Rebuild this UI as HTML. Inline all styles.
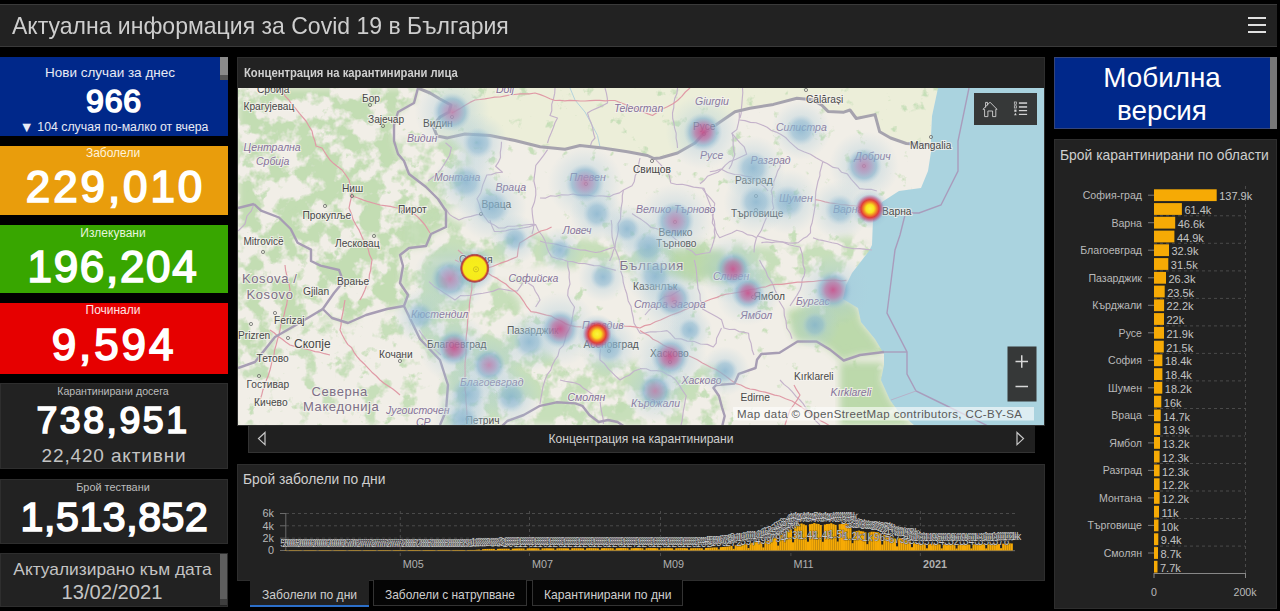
<!DOCTYPE html>
<html><head><meta charset="utf-8">
<style>
*{margin:0;padding:0;box-sizing:border-box}
html,body{width:1280px;height:611px;overflow:hidden;background:#000;font-family:"Liberation Sans",sans-serif}
.a{position:absolute}
.t{position:absolute;white-space:nowrap;line-height:1}
.c{text-align:center}
.panel{position:absolute;background:#222;border:1px solid #2e2e2e}
</style></head><body>
<!-- header -->
<div class="a" style="left:0;top:4px;width:1277px;height:43px;background:#222;border-top:1px solid #3a3a3a;border-bottom:1px solid #3a3a3a"></div>
<div class="t" id="title" style="left:12px;top:14px;font-size:24px;letter-spacing:0px;transform:scaleX(0.959);transform-origin:0 0;color:#cecece">Актуална информация за Covid 19 в България</div>
<div class="a" style="left:1248px;top:17px;width:18px;height:2px;background:#e0e0e0"></div>
<div class="a" style="left:1248px;top:24px;width:18px;height:2px;background:#e0e0e0"></div>
<div class="a" style="left:1248px;top:31px;width:18px;height:2px;background:#e0e0e0"></div>

<!-- left column -->
<div class="a" style="left:0;top:57px;width:228px;height:79px;background:#00288a"></div>
<div class="a" style="left:220px;top:57px;width:8px;height:18px;background:#8a8a8a"></div>
<div class="a" style="left:220px;top:75px;width:8px;height:5px;background:#555"></div>
<div class="t c" style="left:0;top:65.5px;width:220px;font-size:13.5px;color:#e8eaf4">Нови случаи за днес</div>
<div class="t c" style="left:4px;top:85px;width:220px;font-size:32px;font-weight:normal;-webkit-text-stroke:1.7px #fff;color:#fff;letter-spacing:0.8px">966</div>
<div class="t c" style="left:4px;top:119.5px;width:220px;font-size:12.3px;color:#e8eaf4"><span style="font-size:14.5px;vertical-align:-1px">▼</span> 104 случая по-малко от вчера</div>

<div class="a" style="left:0;top:146px;width:228px;height:69px;background:#e99d0c"></div>
<div class="t c" style="left:0;top:147px;width:226px;font-size:12px;color:#fff3dc">Заболели</div>
<div class="t c" style="left:2.5px;top:165px;width:226px;font-size:44px;font-weight:normal;-webkit-text-stroke:1.7px #fff;color:#fff;letter-spacing:2.9px">229,010</div>

<div class="a" style="left:0;top:225px;width:228px;height:68px;background:#38a600"></div>
<div class="t c" style="left:0;top:227px;width:226px;font-size:12px;color:#e6f5dc">Излекувани</div>
<div class="t c" style="left:0;top:245px;width:226px;font-size:44px;font-weight:normal;-webkit-text-stroke:1.7px #fff;color:#fff;letter-spacing:1.7px">196,204</div>

<div class="a" style="left:0;top:303px;width:228px;height:71px;background:#e60000"></div>
<div class="t c" style="left:0;top:304px;width:226px;font-size:12px;color:#ffe4e4">Починали</div>
<div class="t c" style="left:1px;top:323px;width:226px;font-size:44px;font-weight:normal;-webkit-text-stroke:1.7px #fff;color:#fff;letter-spacing:2.9px">9,594</div>

<div class="panel" style="left:0;top:383px;width:228px;height:86px"></div>
<div class="t c" style="left:0;top:386px;width:226px;font-size:10.6px;color:#bdbdbd">Карантинирани досега</div>
<div class="t c" style="left:0;top:402px;width:226px;font-size:37.5px;font-weight:normal;-webkit-text-stroke:1.7px #fff;color:#fff;letter-spacing:2.5px">738,951</div>
<div class="t c" style="left:1px;top:446px;width:226px;font-size:19px;color:#c4c4c4;letter-spacing:0.85px">22,420 активни</div>

<div class="panel" style="left:0;top:479px;width:228px;height:65px"></div>
<div class="t c" style="left:0;top:482px;width:226px;font-size:10.9px;color:#bdbdbd">Брой тествани</div>
<div class="t c" style="left:1.5px;top:496.5px;width:226px;font-size:41px;font-weight:normal;-webkit-text-stroke:1.7px #fff;color:#fff;letter-spacing:0.6px">1,513,852</div>

<div class="panel" style="left:0;top:553px;width:228px;height:54px"></div>
<div class="a" style="left:220px;top:554px;width:7px;height:45px;background:#5e5e5e"></div>
<div class="a" style="left:220px;top:599px;width:7px;height:6px;background:#3e3e3e"></div>
<div class="t c" style="left:1.5px;top:561px;width:222px;font-size:17.35px;color:#c4c4c4">Актуализирано към дата</div>
<div class="t c" style="left:1px;top:581.5px;width:222px;font-size:20.2px;color:#c4c4c4">13/02/2021</div>

<!-- map panel -->
<div class="panel" style="left:237px;top:57px;width:808px;height:369px;background:#222"></div>
<div class="t" style="left:243.5px;top:67px;font-size:12px;font-weight:bold;color:#cfcfcf;transform:scaleX(0.936);transform-origin:0 0">Концентрация на карантинирани лица</div>
<svg class="a" style="left:238px;top:88px" width="806" height="337" viewBox="238 88 806 337" font-family="Liberation Sans">
<defs>
<filter id="bl" x="-20%" y="-20%" width="140%" height="140%"><feGaussianBlur stdDeviation="1.6"/></filter>
<radialGradient id="hz"><stop offset="0" stop-color="#9cc3d8" stop-opacity="0.5"/><stop offset="0.55" stop-color="#a8cadb" stop-opacity="0.28"/><stop offset="1" stop-color="#b0cfdd" stop-opacity="0"/></radialGradient>
<radialGradient id="hb"><stop offset="0" stop-color="#7aaccb" stop-opacity="0.62"/><stop offset="0.6" stop-color="#86b4d0" stop-opacity="0.45"/><stop offset="1" stop-color="#a6c8da" stop-opacity="0"/></radialGradient>
<radialGradient id="hp"><stop offset="0" stop-color="#c07aa8" stop-opacity="0.8"/><stop offset="0.38" stop-color="#a08ab8" stop-opacity="0.62"/><stop offset="0.68" stop-color="#78a8c8" stop-opacity="0.5"/><stop offset="1" stop-color="#a6c8da" stop-opacity="0"/></radialGradient>
<radialGradient id="hm"><stop offset="0" stop-color="#c84c88" stop-opacity="0.88"/><stop offset="0.4" stop-color="#b06aa0" stop-opacity="0.7"/><stop offset="0.7" stop-color="#7caaca" stop-opacity="0.5"/><stop offset="1" stop-color="#a6c8da" stop-opacity="0"/></radialGradient>
<radialGradient id="hs"><stop offset="0" stop-color="#f7f01a"/><stop offset="0.76" stop-color="#f6ea1c"/><stop offset="0.82" stop-color="#ec9424"/><stop offset="0.88" stop-color="#b83c38"/><stop offset="0.95" stop-color="#a8404c" stop-opacity="0.8"/><stop offset="1" stop-color="#a05070" stop-opacity="0.1"/></radialGradient>
<radialGradient id="hw"><stop offset="0" stop-color="#fbf540"/><stop offset="0.28" stop-color="#f8e41e"/><stop offset="0.45" stop-color="#f28a26"/><stop offset="0.62" stop-color="#e03c3a"/><stop offset="0.8" stop-color="#c8406e" stop-opacity="0.55"/><stop offset="1" stop-color="#aa78b4" stop-opacity="0"/></radialGradient>
<filter id="gH" x="0" y="0" width="100%" height="100%" color-interpolation-filters="sRGB"><feTurbulence type="fractalNoise" baseFrequency="0.05" numOctaves="4" seed="4"/><feColorMatrix type="matrix" values="0 0 0 0 0.74 0 0 0 0 0.855 0 0 0 0 0.68 7 0 0 0 -2.9"/><feComponentTransfer><feFuncA type="linear" slope="0.9" intercept="0"/></feComponentTransfer><feGaussianBlur stdDeviation="0.7"/></filter><filter id="gM" x="0" y="0" width="100%" height="100%" color-interpolation-filters="sRGB"><feTurbulence type="fractalNoise" baseFrequency="0.045" numOctaves="4" seed="9"/><feColorMatrix type="matrix" values="0 0 0 0 0.76 0 0 0 0 0.862 0 0 0 0 0.705 7 0 0 0 -3.0"/><feComponentTransfer><feFuncA type="linear" slope="0.9" intercept="0"/></feComponentTransfer><feGaussianBlur stdDeviation="0.7"/></filter><filter id="gL" x="0" y="0" width="100%" height="100%" color-interpolation-filters="sRGB"><feTurbulence type="fractalNoise" baseFrequency="0.07" numOctaves="4" seed="2"/><feColorMatrix type="matrix" values="0 0 0 0 0.76 0 0 0 0 0.862 0 0 0 0 0.705 8 0 0 0 -5.4"/><feComponentTransfer><feFuncA type="linear" slope="0.9" intercept="0"/></feComponentTransfer><feGaussianBlur stdDeviation="0.7"/></filter><filter id="gS" x="0" y="0" width="100%" height="100%" color-interpolation-filters="sRGB"><feTurbulence type="fractalNoise" baseFrequency="0.03" numOctaves="4" seed="5"/><feColorMatrix type="matrix" values="0 0 0 0 0.72 0 0 0 0 0.845 0 0 0 0 0.66 7 0 0 0 -0.8"/><feComponentTransfer><feFuncA type="linear" slope="0.95" intercept="0"/></feComponentTransfer><feGaussianBlur stdDeviation="0.7"/></filter><filter id="gM2" x="0" y="0" width="100%" height="100%" color-interpolation-filters="sRGB"><feTurbulence type="fractalNoise" baseFrequency="0.05" numOctaves="4" seed="13"/><feColorMatrix type="matrix" values="0 0 0 0 0.76 0 0 0 0 0.862 0 0 0 0 0.705 7 0 0 0 -3.9"/><feComponentTransfer><feFuncA type="linear" slope="0.9" intercept="0"/></feComponentTransfer><feGaussianBlur stdDeviation="0.7"/></filter><filter id="mb" x="-10%" y="-10%" width="120%" height="120%"><feGaussianBlur stdDeviation="3.5"/></filter><mask id="cW" maskUnits="userSpaceOnUse" x="238" y="88" width="806" height="337"><polygon points="238,88 418,88 414,103 398,112 394,125 394,141 398,154 404,161 409,174 426,187 438,199 446,211 446,227 431,234 426,246 409,248 400,255 403,266 400,283 408,295 404,306 387,309 366,315 348,323 332,318 296,325 275,337 255,362 238,368" fill="#fff" filter="url(#mb)"/></mask><mask id="cMK" maskUnits="userSpaceOnUse" x="238" y="88" width="806" height="337"><polygon points="238,368 255,362 275,337 296,325 332,318 348,323 366,315 387,309 404,306 420,339 440,360 448,385 446,411 440,425 238,425" fill="#fff" filter="url(#mb)"/></mask><mask id="cR" maskUnits="userSpaceOnUse" x="238" y="88" width="806" height="337"><polygon points="418,88 938,88 932,116 930,145 910,145 880,134 877,116 852,113 824,109 788,99 770,105 723,121 695,144 656,160 625,152 583,145 528,142 505,138 490,134 472,134 453,138 437,136 433,126 440,117 449,112 451,105 440,99 430,93" fill="#fff" filter="url(#mb)"/></mask><mask id="cB" maskUnits="userSpaceOnUse" x="238" y="88" width="806" height="337"><polygon points="405,215 440,214 480,232 560,236 650,246 700,243 780,248 850,236 872,250 862,276 800,284 740,287 690,278 640,274 560,266 480,262 430,262 405,250" fill="#fff" filter="url(#mb)"/></mask><mask id="cSW" maskUnits="userSpaceOnUse" x="238" y="88" width="806" height="337"><polygon points="400,255 430,262 480,262 520,300 530,345 560,360 640,362 720,368 725,425 440,425 448,385 440,360 420,339 404,306 408,295 400,283 403,266" fill="#fff" filter="url(#mb)"/></mask><mask id="cNW" maskUnits="userSpaceOnUse" x="238" y="88" width="806" height="337"><polygon points="394,141 453,138 470,160 460,200 446,211 438,199 426,187 409,174 398,154" fill="#fff" filter="url(#mb)"/></mask><mask id="cST" maskUnits="userSpaceOnUse" x="238" y="88" width="806" height="337"><polygon points="786.7,311.6 803,306 830,300.7 849,300.7 858,308 861,322 875,339 884,354 860,355 841,360.5 830,349.6 816.5,341.5 797.5,341.5 792,333 789.4,322.5" fill="#fff" filter="url(#mb)"/></mask><mask id="cTK" maskUnits="userSpaceOnUse" x="238" y="88" width="806" height="337"><polygon points="840,362 884,362 881,380 890,400 898,411 915,426 840,426" fill="#fff" filter="url(#mb)"/></mask><mask id="cSL" maskUnits="userSpaceOnUse" x="238" y="88" width="806" height="337"><polygon points="670,248 725,250 728,275 690,282 668,270" fill="#fff" filter="url(#mb)"/></mask></defs><rect x="238" y="88" width="806" height="337" fill="#f1eee7"/><polygon points="418,88 938,88 932,116 930,145 906.3,143.5 890.6,138 879.7,131.8 875,114.6 856.3,118.5 850,110 843.8,112.2 828,111.4 821.9,105.2 812.5,99.7 796.9,98.2 773.4,104.4 750,108.3 735,111.7 715,125.5 705,132 695,143 677.5,153 660,158 647.5,155.5 627.5,151.7 602.5,148 580,145.5 565,149.2 540,146.7 515,140.5 490,135.5 465,134 447.5,137.9 437,136 433,126 440,117 449,112 451,105 440,99 430,93" fill="#eceed9"/><polyline points="570,88 575,100 585,112 592,125 597.5,135.5 600,147" fill="none" stroke="#b4d2dc" stroke-width="1"/><g mask="url(#cW)"><rect x="238" y="88" width="230" height="337" filter="url(#gH)"/></g><g mask="url(#cMK)"><rect x="238" y="295" width="230" height="131" filter="url(#gM2)"/></g><rect x="238" y="88" width="806" height="337" filter="url(#gL)"/><g mask="url(#cB)"><rect x="390" y="200" width="500" height="100" filter="url(#gM)"/></g><g mask="url(#cSW)"><rect x="388" y="240" width="350" height="186" filter="url(#gM)"/></g><g mask="url(#cNW)"><rect x="390" y="135" width="85" height="80" filter="url(#gM)"/></g><g mask="url(#cST)"><rect x="770" y="290" width="125" height="80" filter="url(#gS)"/></g><g mask="url(#cTK)"><rect x="835" y="355" width="85" height="75" filter="url(#gS)"/></g><g mask="url(#cSL)"><rect x="660" y="240" width="75" height="50" filter="url(#gS)"/></g><polygon points="938,88 932,116 931,136 931,152 928,171 921,188 899,191 882,202 873,219 872,245 869,251 859,264 852,273 846,285 843,299 858,308 861,322 875,339 884,354 884,365 881,380 890,400 898,411 915,426 1044,426 1044,88" fill="#aad3df"/><polyline points="969,88 958,141 958,171 941,205 919,213 899,213" fill="none" stroke="#a99cbc" stroke-width="1.4"/><polyline points="905,215 900,235 895,250 887,313 907,352 907,374 916,391 947,406 988,426" fill="none" stroke="#a99cbc" stroke-width="1.4"/><polyline points="884,352 907,352" fill="none" stroke="#a99cbc" stroke-width="1.4"/><polyline points="916,391 891,400" fill="none" stroke="#b7aec6" stroke-width="0.9"/><polyline points="445.5,142.8 451.4,147.7 449.5,155.5 446.5,160.5 443.6,165.3 440.4,170.1 435.7,175 428,181" fill="none" stroke="#c4b2ca" stroke-width="1.15" stroke-linejoin="round"/><polyline points="501.5,141.8 501.2,147.2 500.3,152.3 500.5,157.5 498.3,162.4 495.6,166.3 502.5,172.2 496.5,172.8 491.3,174.6 486.8,175 485.1,179.2 482.8,185 480.8,192.7 477,198.7 479.2,204.1 480.3,208.3 482.8,214.4 477.0,214.6 471,216.4 464.4,217.7 459,220 453.4,217.1 449.5,214.4 445.5,208.5" fill="none" stroke="#c4b2ca" stroke-width="1.15" stroke-linejoin="round"/><polyline points="547.6,149.6 543.6,155.4 539.8,160.3 535.8,165.3 535.2,170.8 534.5,175.4 533.9,181 535.7,188.8 535.8,194.8 534.5,202.0 532,208.5 532.3,213.2 532.9,218.1 533.9,224 533.4,228.8 532,234" fill="none" stroke="#c4b2ca" stroke-width="1.15" stroke-linejoin="round"/><polyline points="482.8,214.4 488.7,222.3 494.2,224.9 498.5,228 504.5,228.0 507.9,226.3 514,226.2 520.7,225.5 526.9,224.7 532,224.2 535.6,224.6 538.3,230.5 542.5,236 545.3,241.3 547,247.5 548.6,251.8 551.6,256.7 557.8,258.7 561.6,259.2 567.7,261.2 572.6,261.6 579,263.5 584.7,263.5 589.5,264.6 594.0,265.6 599.7,265.8 604.4,267.6 609.7,268.7 615.8,270.4" fill="none" stroke="#c4b2ca" stroke-width="1.15" stroke-linejoin="round"/><polyline points="489.8,220 491.6,225.3 494.4,231.5 501.0,231.4 505.5,230.9 511.1,229.4 517.3,229 524.0,227.8 528.8,226.9 535.6,224.6" fill="none" stroke="#c4b2ca" stroke-width="1.15" stroke-linejoin="round"/><polyline points="567.7,261.2 567.8,266.5 569.3,272.3 569.1,277.5 570,284 568.1,289.9 567.7,295.6 570.6,301.5 574.5,307 573.2,312.7 572.3,318.5 571.3,323.8 568.8,329.9 566.3,334.0 565,340 563.2,345.6 559.5,349.4 557.9,355.8 555,360 552.0,365.8 550.7,370.2 547.4,374.3 545,380 542.9,386.8 542.0,392.4 540.8,398.6 540,404" fill="none" stroke="#c4b2ca" stroke-width="1.15" stroke-linejoin="round"/><polyline points="611.2,220 611.9,225.4 611.8,231.9 612.1,236.8 613.5,243 615.3,249.3 617.2,254.0 619.4,259.6 620.4,265.8 620.7,271.1 622.6,276.5 623.3,282.7 625,288.7 626.8,293.8 628.2,300.9 631.0,306.2 631.8,311.6 633.2,317.5 634,323 636.4,327.3 640,333.3" fill="none" stroke="#c4b2ca" stroke-width="1.15" stroke-linejoin="round"/><polyline points="460,295.6 464.9,295.8 471.9,295.3 476.4,294.1 483,293.3 488.3,292.2 493.3,291.1 499,288.7 504.3,289.5 511.6,291.0 517.3,291 521.1,285.7 524,279.6 529.2,283.7 533.3,286.4 535.3,291.3 538.5,296.1 540,300 535.6,307" fill="none" stroke="#c4b2ca" stroke-width="1.15" stroke-linejoin="round"/><polyline points="540,241 545.4,242.7 551.8,243.5 556.9,244.4 562.4,246.0 567.8,247 572.6,248.4 579.8,249.9 585.0,250.1 590.5,251.5 595.7,252.5 600.4,251.7 604.6,250.2 609.3,248.6 615,247 613.2,251.2 611.8,256.3 609.6,261" fill="none" stroke="#c4b2ca" stroke-width="1.15" stroke-linejoin="round"/><polyline points="540,198 545.7,198.1 550.6,195.8 556.1,196.3 561.5,194.7 568.2,195.0 573,194 578.1,195.1 583.1,195.1 588.1,195.1 594.5,196.3 599.8,195.8 604.5,196.1 609.6,196.8 613.6,194.5 619.5,192.9 623.5,190 632,185.7 634.2,181.8 635.2,175.8 637.4,171.7 638.6,164.4 640,158" fill="none" stroke="#c4b2ca" stroke-width="1.15" stroke-linejoin="round"/><polyline points="623.5,190 622.3,195.7 622.3,201.7 621.1,208.2 620.7,213.5 620.6,219.0 618.0,223.8 618.5,229.4 617.3,236.0 615.6,241.9 615,247" fill="none" stroke="#c4b2ca" stroke-width="1.15" stroke-linejoin="round"/><polyline points="632,213.5 635.9,216.3 641.4,219.6 646.8,223.5 651,227.4 656.0,228.5 662.6,231.0 668,233 672.2,236.4 676.5,240.1 680.3,241.9 683.9,245.0 687.0,248.7 692.3,251.3 695.9,255 702.4,253.5 709.8,252.5 711.9,247.0 713.5,241.8 715,235.8 714.3,231.3 714.8,225.0 714.3,221.1 712.4,215.6 712.6,210.7 710.0,204.5 707,196.8 704,188.4 698.2,187.6 693.6,187.1 688.2,185.6 682.1,184.3 676.7,184.5 670.8,183 669.7,177.7 668,171.7 663.5,168.5 660.9,164.8 656,160" fill="none" stroke="#c4b2ca" stroke-width="1.15" stroke-linejoin="round"/><polyline points="709.8,171.7 715.5,170.9 721,169 727.6,172.5 734.8,174.5 741.0,175.1 745.2,176.1 751.5,177 755.7,181.0 759.7,183.2 764.4,186.7 768,191" fill="none" stroke="#c4b2ca" stroke-width="1.15" stroke-linejoin="round"/><polyline points="732,132.8 733.2,137.8 733.1,144.4 733.5,148.8 734.8,155 732.9,160.1 731.5,164.7 729,169" fill="none" stroke="#c4b2ca" stroke-width="1.15" stroke-linejoin="round"/><polyline points="739.3,112.5 739.3,118.2 738.4,123.2 736.8,129.6 732,133.3 735.6,137.8 739.8,142.7 744.2,146.8 746.7,154.2 741.2,156.7 735.9,159.2 729.5,161.6 725.4,165.1 722,169 717.8,172.2 711.7,174.5 707.4,176.3 704.5,180.0 700,183.7" fill="none" stroke="#c4b2ca" stroke-width="1.15" stroke-linejoin="round"/><polyline points="739.3,120 745.0,120.6 750.4,122.4 756.1,122.7 761.4,124.7 767.1,127.2 771.0,130.2 776.2,132.1 781,134.6 785.6,137.5 789.7,141.8 794.7,146.4 798.2,149.3 803.9,151.7 810.5,154.2 816.0,157.8 822.8,161.6" fill="none" stroke="#c4b2ca" stroke-width="1.15" stroke-linejoin="round"/><polyline points="781,161.6 779.9,167.2 777.6,171.1 776,176.3 773.8,181.4 773.6,185.4 771.2,191 772.5,195.9 772.3,202.0 773.7,208.2 770.3,212.8 766.3,218 763.6,224.4 761.4,230.3 756.5,237.7 754.5,245.5 754,252.4" fill="none" stroke="#c4b2ca" stroke-width="1.15" stroke-linejoin="round"/><polyline points="702.5,188.6 705.9,193.5 710.2,197.9 714.7,203.3 714.0,209.8 712.9,216.3 712.3,223 714.8,227.3 716.6,233.0 719.6,237.7 725.6,235.3 731.7,233.0 736.8,230.3 742.4,231.7 747.1,234.6 752.3,235.5 756.5,237.7" fill="none" stroke="#c4b2ca" stroke-width="1.15" stroke-linejoin="round"/><polyline points="822.8,161.6 821.3,167.3 819.9,172.3 819.9,175.6 818,181.2 816.7,187.3 815.8,191.9 815.4,198.4 815.2,204.8 814.3,210.8 813,218 812.0,223.3 810.5,227.3 810.5,232.8 806.7,236.8 803.1,238.6 798.2,242.6 793.0,243.1 787.7,242.9 781.9,241.8 776.5,241.8 772.0,242.6 766.8,242.0 761.4,242.6" fill="none" stroke="#c4b2ca" stroke-width="1.15" stroke-linejoin="round"/><polyline points="822.8,161.6 827.1,163.5 833.2,167.4 838.3,168.3 841.6,172.3 847.3,173.9 851.3,179.3 855.2,183.6 859.6,188.6 865.4,189.3 871.2,189.3 876.8,191" fill="none" stroke="#c4b2ca" stroke-width="1.15" stroke-linejoin="round"/><polyline points="813,237.7 818.3,239.7 822.2,240.4 828.1,241.7 832.1,242.7 837.5,243.8 843.1,246.6 847.3,247.5 853.8,248.8 859.9,248.6 866.0,249.4 872,250" fill="none" stroke="#c4b2ca" stroke-width="1.15" stroke-linejoin="round"/><polyline points="757,235.8 762.8,237.6 766.4,239.1 772.1,240.2 776.6,241 783.0,242.3 789.0,244.7 794.5,246.0 800,247" fill="none" stroke="#c4b2ca" stroke-width="1.15" stroke-linejoin="round"/><polyline points="694.3,260 695.7,266.2 696.5,271.9 697,279 697.6,283.9 698.0,288.7 700.0,294.2 700.2,299.8 701.9,303.7 702.5,309 707.5,311.8 712.1,314.2 717.6,317.3 721.5,319.7 724,328 729.3,329.5 734.7,329.3 739.0,331.6 743.2,332.1 748.6,333.3 749.1,338.2 751.1,343.4 752.2,350.3 754,355" fill="none" stroke="#c4b2ca" stroke-width="1.15" stroke-linejoin="round"/><polyline points="759.5,260 762.3,265.4 765.8,271.0 767.7,276.3 771.0,281.1 773.1,284.7 775,290 777.4,295.2 778.7,300.3 781.1,304.2 784,309 784.3,315.3 786.0,320.9 786.7,328 790.2,333.3 792,338.8" fill="none" stroke="#c4b2ca" stroke-width="1.15" stroke-linejoin="round"/><polyline points="640,333.3 645.4,332.9 650.6,331.8 656.5,331.8 661.2,331.5 667,330.6 670.8,333.8 675.3,338.8 681.2,338.9 687.3,341.1 694.3,341.5 700.4,344.0 707.4,344.4 713.3,347 716.2,343.1 716.6,338.2 719.3,332.7 721.5,328" fill="none" stroke="#c4b2ca" stroke-width="1.15" stroke-linejoin="round"/><polyline points="640,368.6 646.3,368.8 650.9,370.7 656.7,370.6 661.7,371.3 667.1,374.6 671.0,376.1 675.3,379.5 679.2,384.9 682.0,389.6 686.2,395.8 685.3,400.2 684.3,406.2 683.4,410.5 682.7,415.8 682.1,421.0 680.7,426" fill="none" stroke="#c4b2ca" stroke-width="1.15" stroke-linejoin="round"/><polyline points="800,247 802.1,253.6 802.9,258.0 803.1,265.0 805,270 804.3,275.2 802.2,279.6 801.6,285.1 800,290 796.8,295.6 793.8,300.1 790,306" fill="none" stroke="#c4b2ca" stroke-width="1.15" stroke-linejoin="round"/><polyline points="680,290 674.5,293.4 670.7,295.7 664.2,296.7 660,300 655.8,303.6 652.7,306.8 648.8,310.5 645,315" fill="none" stroke="#c4b2ca" stroke-width="1.15" stroke-linejoin="round"/><polyline points="429,281.7 433.8,286.2 440,290 445.1,293.6 449.8,296.6 455,300 460,296" fill="none" stroke="#c4b2ca" stroke-width="1.15" stroke-linejoin="round"/><polyline points="419,330 422.1,334.7 426.8,340.6 430,345 434.7,349.3 441,355" fill="none" stroke="#c4b2ca" stroke-width="1.15" stroke-linejoin="round"/><polyline points="600,340 600.6,345.2 600.5,349.5 599.9,354.6 600,360 604.6,363.8 608.3,368.9 611.7,372.1 616.4,376.8 620,380 624.9,377.0 629.3,375.2 634.2,371.0 640,369" fill="none" stroke="#c4b2ca" stroke-width="1.15" stroke-linejoin="round"/><polyline points="560,380 565.1,381.2 570.3,382.1 575.5,383.0 580,385 583.5,388.3 587.2,390.6 592.4,394.3 595.6,396.4 600,400 600.6,406.4 601.5,411.3 603.0,418.1 603.5,424" fill="none" stroke="#c4b2ca" stroke-width="1.15" stroke-linejoin="round"/><polyline points="238,231 245,224 247,216 251.3,210.8 254,204" fill="none" stroke="#c4b2ca" stroke-width="1.15" stroke-linejoin="round"/><polyline points="555,88 554.7,93.4 553.5,98.6 551.7,104.3 551.8,110.7 550,115.5 557.5,118 555.0,122.8 553.3,127.8 551.3,132.8 549.0,138.1 547.5,143" fill="none" stroke="#c4b2ca" stroke-width="1.15" stroke-linejoin="round"/><polyline points="605,88 606.4,93.1 607.3,98.1 607.5,103 601.9,106.0 598.2,107.6 591.6,110.5 587.5,113 589.1,118.1 591.3,123.3 592.5,127.2 593.6,133.5 595,138 591.8,141.7 590,147" fill="none" stroke="#c4b2ca" stroke-width="1.15" stroke-linejoin="round"/><polyline points="677.5,88 676.9,93.7 674.8,98.2 673.9,103.4 673.8,107.5 672.5,113 672.7,118.5 674.0,123.5 674.5,127.7 676.2,133.3 676.1,138.1 677.2,143.4 677.5,148" fill="none" stroke="#c4b2ca" stroke-width="1.15" stroke-linejoin="round"/><polyline points="742.5,88 742.8,92.8 742.3,98.3 741.9,103.6 741.4,108.7 741.2,113.3 740,118" fill="none" stroke="#c4b2ca" stroke-width="1.15" stroke-linejoin="round"/><polyline points="780,380 784.0,384.4 788.5,387.9 791.9,391.4 796.4,396.9 800,400 803.1,403.6 806.1,408.2 809.6,413.3 812.5,416.3 816.0,421.1 820,425" fill="none" stroke="#c4b2ca" stroke-width="1.15" stroke-linejoin="round"/><polyline points="282,88 285,96 288.9,100.0 291.9,104.6 296,109 299.4,113.4 302.2,116.6 306,121 308.7,125.7 312,131 313.1,136.2 314.8,140.7 316,146 322,148 325.7,153.8 330,160 333.7,163.6 337.8,166.7 342,170 345.8,175.0 349,180 350.3,186.4 352,192 351.4,197.2 350.0,203.1 349,208 351.3,213.4 353.2,219.8 356,225 358.8,229.6 361.0,234.5 363.3,239.7 366,244 368.2,249.1 369.5,254.6 372,260 371.1,265.3 370.7,270.1 369.4,274.7 369,280 366.6,284.8 364.9,290.0 362.4,295.5 360,300" fill="none" stroke="#e09aa6" stroke-width="1.2" stroke-linejoin="round"/><polyline points="352,196 357.4,197.8 362.9,199.9 368.3,201.7 374.7,203.5 380,205 384.6,205.6 390.2,206.3 395.0,207.5 400.5,208.4 405.4,209.0 410,210 414.0,213.7 417.9,217.1 421.6,221.0 425,225 430,233" fill="none" stroke="#e09aa6" stroke-width="1.2" stroke-linejoin="round"/><polyline points="452,113 456.6,110.4 460.9,108.1 465.6,105.0 470.0,102.4 475,100 480.0,99.5 484.9,98.9 490,98 494.6,97.1 500.0,97.0 505.3,95.9 510,95 514.5,94.5 520.2,93.9 525.1,93.8 529.5,93.9 535,93 540.3,94.6 545.1,96.5 549.9,98.7 555,100.5 559.8,100.4 564.9,100.8 569.8,100.4 575.2,100.7 580.4,101.0 585,101 590.2,100.7 595.3,100.4 599.6,100.3 605.2,100.9 609.7,100.5 615,100.5 620.0,102.5 624.0,104.0 628.7,105.7 633.7,107.6 638.9,109.8 643.1,111.9 648.1,113.9 652.5,115.5 657.4,112.3 662.4,109.0 667.4,106.7 673.0,103.8 677.5,100.5 681.8,96.4 685.4,92.0 690,88" fill="none" stroke="#e09aa6" stroke-width="1.2" stroke-linejoin="round"/><polyline points="455,260 459.8,262.2 464.6,263.9 470.0,266.3 475,268 481.6,270.5 487.5,272.7 491.7,275.8 497.1,278.4 501.1,281.2 505.8,284 510.0,288.1 515.5,291.7 519.6,295.6 523.6,301.3 526.9,306.7 531,311.6 536.3,312.4 540.9,313.6 546.5,315.2 551.6,316.2 556.0,318.9 560.7,320.8 565.0,323.6 570,325.4 575.7,326.6 582.2,327.0 588.3,327.7 593.6,327.1 599.3,327.4 604.5,326.7 609.1,326.5 614.5,326.2 620,325.4 624.7,326.1 630.3,326.4 635.0,326.9 640,328 644.6,325.6 650.7,324.3 655.4,321.7 660.5,320.0 665.3,317.8 670.8,315.2 675.3,313.6 680.7,311.6 685.4,309.4 691.0,307.2 696.0,305.3 701.2,303.3 706.3,301.0 711.5,299.0 716.9,297.4 721.5,295.3 726.4,294.2 731.5,293.5 736.6,292.6 741.2,291.8 746.5,290.7 751.0,289.3 756.1,288.8 761.0,287.4 765.9,286.8 770.7,284.9 775.8,284.4 781.5,284.4 786.9,283.6 792.4,282.9 797.6,282.2 802.6,282.1 808.4,281.6 813.4,281.5 819.3,280.6 824.7,280.4 829.9,280.3 835.3,280.0 841.4,280.9 846.4,280.4" fill="none" stroke="#e09aa6" stroke-width="1.2" stroke-linejoin="round"/><polyline points="487.5,268 492.6,266.5 497.4,264.5 502.1,262.6 507.4,260.9 511.9,258.9 517.3,256.7 518.1,249.9 519.6,243 525.4,239.4 530.0,236.6 535.6,233.7 540.8,231.0 546.7,229.5 551.6,227" fill="none" stroke="#e09aa6" stroke-width="1.2" stroke-linejoin="round"/><polyline points="640,330.6 644.4,333.2 649.1,335.6 653.0,339.2 657.8,341.5 662.9,344.7 667,347 672.2,348.8 677.3,351.7 683.1,353.1 688,355.5 693.0,357.7 697.3,359.8 702.4,363.0 706.4,365.0 711.0,367.5 716,369.5 720.6,372.6 726.2,376.4 731.4,380.4 736,383.6 740.9,385.0 745.5,387.6 750,389 754.9,389.7 759.6,391.1 765.0,392.2 769.3,393.4 774.7,395.1 779.5,396 785.6,398.7 792,401 797.9,404.8 802.7,408.1 808.4,412 813.1,415.0 816.8,417.7 820.9,420.9 825.6,423.2 830,426" fill="none" stroke="#e09aa6" stroke-width="1.2" stroke-linejoin="round"/><polyline points="345,300 344.2,304.5 343.4,309.8 342.3,315.3 341.3,319.8 341.1,324.7 340,330 342.3,335.0 345,340 347.7,344.4 351.5,347.5 354.0,352.3 356.9,356.4 360,360 364.0,363.7 368.1,368.1 371.9,372.2 376.3,376.0 380,380 384.0,383.3 388.2,386.0 392.5,388.7 396.3,391.7 400,395" fill="none" stroke="#e09aa6" stroke-width="1.2" stroke-linejoin="round"/><polyline points="270,330 274.1,332.7 277.9,336.3 282.3,339.3 285.7,342.0 290,345 294.7,346.3 300.0,347.0 305.1,349.0 310,350 315.1,351.6 319.7,352.2 324.5,353.7 330,355" fill="none" stroke="#e09aa6" stroke-width="1.2" stroke-linejoin="round"/><polyline points="815.4,199.6 820.3,200.5 825.0,201.9 829.7,202.9 835.1,203.6 840,204.5 845.3,204.8 849.6,205.5 854.5,206.1 860.1,206.9 864.8,207.5 870,208" fill="none" stroke="#e09aa6" stroke-width="1.2" stroke-linejoin="round"/><polyline points="285,265 285.6,270.3 286.7,274.8 287.7,280.2 289.3,285.3 290,290 288.3,294.9 287.4,299.7 286.7,304.5 285.0,310.3 284.2,314.6 282.5,320.2 280.8,324.7 280,330 279.1,334.6 277.4,339.8 276.2,344.6 274.5,350.5 274.0,355.2 272.2,359.8 271.3,364.7 270,370 268.3,375.4 266.5,379.8 265.5,385.1 262.9,389.9 261.8,394.6 260,400" fill="none" stroke="#e09aa6" stroke-width="1.2" stroke-linejoin="round"/><polyline points="794,385 796.8,390.2 800,395 797.0,400.1 793.7,405.0 790,410 788.2,415.3 786.5,420.3 785,425" fill="none" stroke="#e09aa6" stroke-width="1.2" stroke-linejoin="round"/><polyline points="458,250 461.7,253.2 465.7,256.7 470,260 474,268" fill="none" stroke="#e09aa6" stroke-width="1.2" stroke-linejoin="round"/><polyline points="474,268 473.0,273.0 472.4,278.6 471.8,283.9 471.8,289.5 471.0,294.4 470,300 469.4,304.6 469.2,309.9 468.3,314.5 467.7,319.8 467.4,325.4 467.2,329.8 466.4,334.7 466,340 466.3,344.9 466.0,350.2 466.0,354.5 465.3,359.9 465.0,365.4 465.1,370.3 465.1,374.6 465,380 465.1,384.7 465.0,389.7 465.8,394.5 465.8,399.9 466.3,404.6 466.7,409.8 467.0,415.2 467,420" fill="none" stroke="#e09aa6" stroke-width="1.2" stroke-linejoin="round"/><polyline points="418,88 414,103 398,112 394,125 394,141 398,154 404,161 409,174 426,187 438,199 446,211 446,227 431,234 426,246 409,248 400,255 403,266 400,283 408,295 404,306 420,339 440,360 448,385 446,411 440,425" fill="none" stroke="#a79db4" stroke-width="2.4" stroke-linejoin="round"/><polyline points="502,426 507.3,421 523.7,415 540,405.8 556.5,402.3 575.3,403.4 582.3,405.8 589.4,415 598.7,422 608,420 617.5,422 625,427" fill="none" stroke="#a79db4" stroke-width="2.4" stroke-linejoin="round"/><polyline points="722,427 724.7,416 722,407.5 719,396 713.4,387.8 716.3,385 734.5,383.6 738.8,373.8 755.6,368 757,359.7 761.3,354 779.5,352.7 797.5,341.5 816.5,341.5 830,349.6 843.7,360.5 860,355 884,352" fill="none" stroke="#a79db4" stroke-width="2.4" stroke-linejoin="round"/><polyline points="254,204 261,210.6 279,217.5 290.7,229 297.6,242.7 311,249.6 311,261 320.5,265.6 339,270 343.4,281.7 334,293 322.8,309 332,318 348,323 366,315 387,309 404,306" fill="none" stroke="#a79db4" stroke-width="2.4" stroke-linejoin="round"/><polyline points="238,368 255,362 275,337 296,325 322.8,309" fill="none" stroke="#a79db4" stroke-width="2.4" stroke-linejoin="round"/><polyline points="238,208 254,204" fill="none" stroke="#a79db4" stroke-width="2.4" stroke-linejoin="round"/><polyline points="418,88 430,93 440,99 451,105 449,112 440,117 433,126 437,136 447.5,137.9 465,134 490,135.5 515,140.5 540,146.7 565,149.2 580,145.5 602.5,148 627.5,151.7 647.5,155.5 654,158.5 660,158 677.5,153 695,143 705,132 715,125.5 735,111.7 750,108.3 773.4,104.4 796.9,98.2 812.5,99.7 821.9,105.2 828,111.4 843.8,112.2 850,110 856.3,118.5 875,114.6 879.7,131.8 890.6,138 906.3,143.5 933,145" fill="none" stroke="#a6a3ae" stroke-width="3" stroke-linejoin="round"/><circle cx="370" cy="105" r="1.6" fill="none" stroke="#6d6d6d" stroke-width="0.8"/><circle cx="383" cy="126" r="1.6" fill="none" stroke="#6d6d6d" stroke-width="0.8"/><circle cx="452" cy="117" r="1.6" fill="none" stroke="#6d6d6d" stroke-width="0.8"/><circle cx="352" cy="196" r="1.6" fill="none" stroke="#6d6d6d" stroke-width="0.8"/><circle cx="325" cy="206" r="1.6" fill="none" stroke="#6d6d6d" stroke-width="0.8"/><circle cx="403" cy="212" r="1.6" fill="none" stroke="#6d6d6d" stroke-width="0.8"/><circle cx="374" cy="236" r="1.6" fill="none" stroke="#6d6d6d" stroke-width="0.8"/><circle cx="263" cy="252" r="1.6" fill="none" stroke="#6d6d6d" stroke-width="0.8"/><circle cx="313" cy="288" r="1.6" fill="none" stroke="#6d6d6d" stroke-width="0.8"/><circle cx="275" cy="313" r="1.6" fill="none" stroke="#6d6d6d" stroke-width="0.8"/><circle cx="251" cy="324" r="1.6" fill="none" stroke="#6d6d6d" stroke-width="0.8"/><circle cx="288" cy="338" r="1.6" fill="none" stroke="#6d6d6d" stroke-width="0.8"/><circle cx="400" cy="361" r="1.6" fill="none" stroke="#6d6d6d" stroke-width="0.8"/><circle cx="259" cy="376" r="1.6" fill="none" stroke="#6d6d6d" stroke-width="0.8"/><circle cx="257" cy="400" r="1.6" fill="none" stroke="#6d6d6d" stroke-width="0.8"/><circle cx="467" cy="419" r="1.6" fill="none" stroke="#6d6d6d" stroke-width="0.8"/><circle cx="481" cy="214" r="1.6" fill="none" stroke="#6d6d6d" stroke-width="0.8"/><circle cx="652" cy="161" r="1.6" fill="none" stroke="#6d6d6d" stroke-width="0.8"/><circle cx="704" cy="134" r="1.6" fill="none" stroke="#6d6d6d" stroke-width="0.8"/><circle cx="756" cy="196" r="1.6" fill="none" stroke="#6d6d6d" stroke-width="0.8"/><circle cx="756" cy="210" r="1.6" fill="none" stroke="#6d6d6d" stroke-width="0.8"/><circle cx="675" cy="222" r="1.6" fill="none" stroke="#6d6d6d" stroke-width="0.8"/><circle cx="931" cy="137" r="1.6" fill="none" stroke="#6d6d6d" stroke-width="0.8"/><circle cx="806" cy="90" r="1.6" fill="none" stroke="#6d6d6d" stroke-width="0.8"/><circle cx="864" cy="166" r="1.6" fill="none" stroke="#6d6d6d" stroke-width="0.8"/><circle cx="586" cy="184" r="1.6" fill="none" stroke="#6d6d6d" stroke-width="0.8"/><circle cx="475" cy="268" r="1.6" fill="none" stroke="#6d6d6d" stroke-width="0.8"/><circle cx="609" cy="351" r="1.6" fill="none" stroke="#6d6d6d" stroke-width="0.8"/><circle cx="670" cy="362" r="1.6" fill="none" stroke="#6d6d6d" stroke-width="0.8"/><circle cx="753" cy="297" r="1.6" fill="none" stroke="#6d6d6d" stroke-width="0.8"/><circle cx="530" cy="329" r="1.6" fill="none" stroke="#6d6d6d" stroke-width="0.8"/><text x="243.5" y="110" font-size="10.2" fill="#484848" stroke="#f6f4ef" stroke-width="2" stroke-opacity="0.75" paint-order="stroke">Крагујевац</text><text x="362" y="102" font-size="10.2" fill="#484848" stroke="#f6f4ef" stroke-width="2" stroke-opacity="0.75" paint-order="stroke">Бор</text><text x="368" y="123" font-size="10.2" fill="#484848" stroke="#f6f4ef" stroke-width="2" stroke-opacity="0.75" paint-order="stroke">Зајечар</text><text x="423" y="127" font-size="10.2" fill="#484848" stroke="#f6f4ef" stroke-width="2" stroke-opacity="0.75" paint-order="stroke">Видин</text><text x="342" y="192" font-size="10.2" fill="#484848" stroke="#f6f4ef" stroke-width="2" stroke-opacity="0.75" paint-order="stroke">Ниш</text><text x="302.5" y="219" font-size="10.2" fill="#484848" stroke="#f6f4ef" stroke-width="2" stroke-opacity="0.75" paint-order="stroke">Прокупље</text><text x="398" y="213" font-size="10.2" fill="#484848" stroke="#f6f4ef" stroke-width="2" stroke-opacity="0.75" paint-order="stroke">Пирот</text><text x="335" y="246.5" font-size="10.2" fill="#484848" stroke="#f6f4ef" stroke-width="2" stroke-opacity="0.75" paint-order="stroke">Лесковац</text><text x="243.5" y="245" font-size="10" fill="#484848" stroke="#f6f4ef" stroke-width="2" stroke-opacity="0.75" paint-order="stroke">Mitrovicë</text><text x="481.5" y="207.5" font-size="10.2" fill="#484848" stroke="#f6f4ef" stroke-width="2" stroke-opacity="0.75" paint-order="stroke">Враца</text><text x="633" y="173" font-size="10.2" fill="#484848" stroke="#f6f4ef" stroke-width="2" stroke-opacity="0.75" paint-order="stroke">Свищов</text><text x="693" y="130" font-size="10.2" fill="#484848" stroke="#f6f4ef" stroke-width="2" stroke-opacity="0.75" paint-order="stroke">Русе</text><text x="735" y="184" font-size="10.2" fill="#484848" stroke="#f6f4ef" stroke-width="2" stroke-opacity="0.75" paint-order="stroke">Разград</text><text x="731" y="217" font-size="10.2" fill="#484848" stroke="#f6f4ef" stroke-width="2" stroke-opacity="0.75" paint-order="stroke">Търговище</text><text x="658.5" y="235.5" font-size="10.2" fill="#484848" stroke="#f6f4ef" stroke-width="2" stroke-opacity="0.75" paint-order="stroke">Велико</text><text x="656" y="246.5" font-size="10.2" fill="#484848" stroke="#f6f4ef" stroke-width="2" stroke-opacity="0.75" paint-order="stroke">Търново</text><text x="806" y="103" font-size="10.2" fill="#484848" stroke="#f6f4ef" stroke-width="2" stroke-opacity="0.75" paint-order="stroke">Călărași</text><text x="910" y="149" font-size="10.2" fill="#484848" stroke="#f6f4ef" stroke-width="2" stroke-opacity="0.75" paint-order="stroke">Mangalia</text><text x="882" y="214.5" font-size="10.2" fill="#484848" stroke="#f6f4ef" stroke-width="2" stroke-opacity="0.75" paint-order="stroke">Варна</text><text x="459" y="263" font-size="10.5" fill="#484848" stroke="#f6f4ef" stroke-width="2" stroke-opacity="0.75" paint-order="stroke">София</text><text x="337" y="284.5" font-size="10.2" fill="#484848" stroke="#f6f4ef" stroke-width="2" stroke-opacity="0.75" paint-order="stroke">Врање</text><text x="303" y="294.5" font-size="10.2" fill="#484848" stroke="#f6f4ef" stroke-width="2" stroke-opacity="0.75" paint-order="stroke">Gjilan</text><text x="274" y="323.5" font-size="10.2" fill="#484848" stroke="#f6f4ef" stroke-width="2" stroke-opacity="0.75" paint-order="stroke">Ferizaj</text><text x="238" y="339" font-size="10.2" fill="#484848" stroke="#f6f4ef" stroke-width="2" stroke-opacity="0.75" paint-order="stroke">Prizren</text><text x="294" y="348" font-size="12" fill="#484848" stroke="#f6f4ef" stroke-width="2" stroke-opacity="0.75" paint-order="stroke">Скопје</text><text x="256.5" y="362" font-size="10.2" fill="#484848" stroke="#f6f4ef" stroke-width="2" stroke-opacity="0.75" paint-order="stroke">Тетово</text><text x="379" y="358" font-size="10.2" fill="#484848" stroke="#f6f4ef" stroke-width="2" stroke-opacity="0.75" paint-order="stroke">Кочани</text><text x="246.5" y="388" font-size="10.2" fill="#484848" stroke="#f6f4ef" stroke-width="2" stroke-opacity="0.75" paint-order="stroke">Гостивар</text><text x="254" y="405.5" font-size="10.2" fill="#484848" stroke="#f6f4ef" stroke-width="2" stroke-opacity="0.75" paint-order="stroke">Кичево</text><text x="427" y="348" font-size="10.2" fill="#484848" stroke="#f6f4ef" stroke-width="2" stroke-opacity="0.75" paint-order="stroke">Благоевград</text><text x="465.5" y="424" font-size="10.2" fill="#484848" stroke="#f6f4ef" stroke-width="2" stroke-opacity="0.75" paint-order="stroke">Петрич</text><text x="633" y="290" font-size="10.2" fill="#484848" stroke="#f6f4ef" stroke-width="2" stroke-opacity="0.75" paint-order="stroke">Казанлък</text><text x="507" y="333.5" font-size="10.2" fill="#484848" stroke="#f6f4ef" stroke-width="2" stroke-opacity="0.75" paint-order="stroke">Пазарджик</text><text x="583.5" y="348" font-size="10.2" fill="#484848" stroke="#f6f4ef" stroke-width="2" stroke-opacity="0.75" paint-order="stroke">Асеновград</text><text x="650" y="356.5" font-size="10.2" fill="#484848" stroke="#f6f4ef" stroke-width="2" stroke-opacity="0.75" paint-order="stroke">Хасково</text><text x="753.5" y="300" font-size="10.2" fill="#484848" stroke="#f6f4ef" stroke-width="2" stroke-opacity="0.75" paint-order="stroke">Ямбол</text><text x="794" y="379.5" font-size="10.2" fill="#484848" stroke="#f6f4ef" stroke-width="2" stroke-opacity="0.75" paint-order="stroke">Kırklareli</text><text x="740.5" y="401" font-size="10.2" fill="#484848" stroke="#f6f4ef" stroke-width="2" stroke-opacity="0.75" paint-order="stroke">Edirne</text><text x="257" y="93" font-size="10.2" fill="#484848" stroke="#f6f4ef" stroke-width="2" stroke-opacity="0.75" paint-order="stroke">Србија</text><text x="242" y="283" font-size="13" fill="#7d6f86" letter-spacing="0.6" stroke="#f6f4ef" stroke-width="2" stroke-opacity="0.75" paint-order="stroke">Kosova /</text><text x="246.5" y="299" font-size="13" fill="#7d6f86" letter-spacing="0.6" stroke="#f6f4ef" stroke-width="2" stroke-opacity="0.75" paint-order="stroke">Kosovo</text><text x="311.5" y="395.5" font-size="13" fill="#7d6f86" letter-spacing="0.6" stroke="#f6f4ef" stroke-width="2" stroke-opacity="0.75" paint-order="stroke">Северна</text><text x="303" y="411" font-size="13" fill="#7d6f86" letter-spacing="0.6" stroke="#f6f4ef" stroke-width="2" stroke-opacity="0.75" paint-order="stroke">Македонија</text><text x="619.5" y="270" font-size="13.5" fill="#7d6f86" letter-spacing="0.6" stroke="#f6f4ef" stroke-width="2" stroke-opacity="0.75" paint-order="stroke">България</text><text x="243.5" y="150.5" font-size="10.5" font-style="italic" fill="#86729a" stroke="#f6f4ef" stroke-width="2" stroke-opacity="0.75" paint-order="stroke">Централна</text><text x="256" y="164.5" font-size="10.5" font-style="italic" fill="#86729a" stroke="#f6f4ef" stroke-width="2" stroke-opacity="0.75" paint-order="stroke">Србија</text><text x="407" y="142" font-size="10.5" font-style="italic" fill="#86729a" stroke="#f6f4ef" stroke-width="2" stroke-opacity="0.75" paint-order="stroke">Видин</text><text x="434" y="181" font-size="10.5" font-style="italic" fill="#86729a" stroke="#f6f4ef" stroke-width="2" stroke-opacity="0.75" paint-order="stroke">Монтана</text><text x="495.5" y="191" font-size="10.5" font-style="italic" fill="#86729a" stroke="#f6f4ef" stroke-width="2" stroke-opacity="0.75" paint-order="stroke">Враца</text><text x="569.5" y="181" font-size="10.5" font-style="italic" fill="#86729a" stroke="#f6f4ef" stroke-width="2" stroke-opacity="0.75" paint-order="stroke">Плевен</text><text x="562.5" y="233.5" font-size="10.5" font-style="italic" fill="#86729a" stroke="#f6f4ef" stroke-width="2" stroke-opacity="0.75" paint-order="stroke">Ловеч</text><text x="636" y="213" font-size="10.5" font-style="italic" fill="#86729a" stroke="#f6f4ef" stroke-width="2" stroke-opacity="0.75" paint-order="stroke">Велико Търново</text><text x="614" y="111.5" font-size="10.5" font-style="italic" fill="#86729a" stroke="#f6f4ef" stroke-width="2" stroke-opacity="0.75" paint-order="stroke">Teleorman</text><text x="695" y="104.5" font-size="10.5" font-style="italic" fill="#86729a" stroke="#f6f4ef" stroke-width="2" stroke-opacity="0.75" paint-order="stroke">Giurgiu</text><text x="496" y="93" font-size="10.5" font-style="italic" fill="#86729a" stroke="#f6f4ef" stroke-width="2" stroke-opacity="0.75" paint-order="stroke">Dolj</text><text x="700" y="159" font-size="10.5" font-style="italic" fill="#86729a" stroke="#f6f4ef" stroke-width="2" stroke-opacity="0.75" paint-order="stroke">Русе</text><text x="750.5" y="164" font-size="10.5" font-style="italic" fill="#86729a" stroke="#f6f4ef" stroke-width="2" stroke-opacity="0.75" paint-order="stroke">Разград</text><text x="776" y="131" font-size="10.5" font-style="italic" fill="#86729a" stroke="#f6f4ef" stroke-width="2" stroke-opacity="0.75" paint-order="stroke">Силистра</text><text x="854.5" y="160" font-size="10.5" font-style="italic" fill="#86729a" stroke="#f6f4ef" stroke-width="2" stroke-opacity="0.75" paint-order="stroke">Добрич</text><text x="779" y="202" font-size="10.5" font-style="italic" fill="#86729a" stroke="#f6f4ef" stroke-width="2" stroke-opacity="0.75" paint-order="stroke">Шумен</text><text x="833" y="213" font-size="10.5" font-style="italic" fill="#86729a" stroke="#f6f4ef" stroke-width="2" stroke-opacity="0.75" paint-order="stroke">Варна</text><text x="713" y="280" font-size="10.5" font-style="italic" fill="#86729a" stroke="#f6f4ef" stroke-width="2" stroke-opacity="0.75" paint-order="stroke">Сливен</text><text x="740.5" y="319" font-size="10.5" font-style="italic" fill="#86729a" stroke="#f6f4ef" stroke-width="2" stroke-opacity="0.75" paint-order="stroke">Ямбол</text><text x="796" y="304.5" font-size="10.5" font-style="italic" fill="#86729a" stroke="#f6f4ef" stroke-width="2" stroke-opacity="0.75" paint-order="stroke">Бургас</text><text x="634" y="307.5" font-size="10.5" font-style="italic" fill="#86729a" stroke="#f6f4ef" stroke-width="2" stroke-opacity="0.75" paint-order="stroke">Стара Загора</text><text x="508.5" y="281.5" font-size="10.5" font-style="italic" fill="#86729a" stroke="#f6f4ef" stroke-width="2" stroke-opacity="0.75" paint-order="stroke">Софийска</text><text x="582" y="329" font-size="10.5" font-style="italic" fill="#86729a" stroke="#f6f4ef" stroke-width="2" stroke-opacity="0.75" paint-order="stroke">Пловдив</text><text x="681.5" y="384" font-size="10.5" font-style="italic" fill="#86729a" stroke="#f6f4ef" stroke-width="2" stroke-opacity="0.75" paint-order="stroke">Хасково</text><text x="567.5" y="401" font-size="10.5" font-style="italic" fill="#86729a" stroke="#f6f4ef" stroke-width="2" stroke-opacity="0.75" paint-order="stroke">Смолян</text><text x="631" y="407" font-size="10.5" font-style="italic" fill="#86729a" stroke="#f6f4ef" stroke-width="2" stroke-opacity="0.75" paint-order="stroke">Кърджали</text><text x="411" y="317.5" font-size="10.5" font-style="italic" fill="#86729a" stroke="#f6f4ef" stroke-width="2" stroke-opacity="0.75" paint-order="stroke">Кюстендил</text><text x="460" y="385.5" font-size="10.5" font-style="italic" fill="#86729a" stroke="#f6f4ef" stroke-width="2" stroke-opacity="0.75" paint-order="stroke">Благоевград</text><text x="386" y="414" font-size="10.5" font-style="italic" fill="#86729a" stroke="#f6f4ef" stroke-width="2" stroke-opacity="0.75" paint-order="stroke">Југоисточен</text><text x="830.5" y="395.5" font-size="10.5" font-style="italic" fill="#86729a" stroke="#f6f4ef" stroke-width="2" stroke-opacity="0.75" paint-order="stroke">Kırklareli</text><text x="416" y="426" font-size="10.5" font-style="italic" fill="#86729a" stroke="#f6f4ef" stroke-width="2" stroke-opacity="0.75" paint-order="stroke">СР</text><circle cx="452" cy="112" r="37.5" fill="url(#hz)"/><circle cx="478" cy="143" r="30.0" fill="url(#hz)"/><circle cx="466" cy="182" r="32.5" fill="url(#hz)"/><circle cx="492" cy="207" r="35.0" fill="url(#hz)"/><circle cx="585" cy="183" r="37.5" fill="url(#hz)"/><circle cx="597" cy="214" r="27.5" fill="url(#hz)"/><circle cx="627" cy="229" r="25.0" fill="url(#hz)"/><circle cx="648" cy="247" r="30.0" fill="url(#hz)"/><circle cx="515" cy="239" r="25.0" fill="url(#hz)"/><circle cx="603" cy="277" r="25.0" fill="url(#hz)"/><circle cx="703" cy="132" r="37.5" fill="url(#hz)"/><circle cx="675" cy="221" r="37.5" fill="url(#hz)"/><circle cx="753" cy="168" r="32.5" fill="url(#hz)"/><circle cx="756" cy="202" r="32.5" fill="url(#hz)"/><circle cx="788" cy="202" r="32.5" fill="url(#hz)"/><circle cx="864" cy="166" r="35.0" fill="url(#hz)"/><circle cx="801" cy="130" r="30.0" fill="url(#hz)"/><circle cx="733" cy="269" r="35.0" fill="url(#hz)"/><circle cx="748" cy="293" r="32.5" fill="url(#hz)"/><circle cx="833" cy="290" r="37.5" fill="url(#hz)"/><circle cx="673" cy="299" r="35.0" fill="url(#hz)"/><circle cx="655" cy="276" r="30.0" fill="url(#hz)"/><circle cx="670" cy="357" r="37.5" fill="url(#hz)"/><circle cx="655" cy="391" r="32.5" fill="url(#hz)"/><circle cx="609" cy="348" r="30.0" fill="url(#hz)"/><circle cx="560" cy="329" r="37.5" fill="url(#hz)"/><circle cx="529" cy="342" r="30.0" fill="url(#hz)"/><circle cx="511" cy="397" r="30.0" fill="url(#hz)"/><circle cx="450" cy="279" r="37.5" fill="url(#hz)"/><circle cx="420" cy="316" r="27.5" fill="url(#hz)"/><circle cx="454" cy="348" r="35.0" fill="url(#hz)"/><circle cx="489" cy="365" r="32.5" fill="url(#hz)"/><circle cx="468" cy="394" r="32.5" fill="url(#hz)"/><circle cx="463" cy="420" r="30.0" fill="url(#hz)"/><circle cx="725" cy="371" r="25.0" fill="url(#hz)"/><circle cx="815" cy="325" r="25.0" fill="url(#hz)"/><circle cx="840" cy="210" r="30.0" fill="url(#hz)"/><circle cx="690" cy="330" r="22.5" fill="url(#hz)"/><circle cx="560" cy="250" r="22.5" fill="url(#hz)"/><circle cx="452" cy="112" r="19.5" fill="url(#hp)"/><circle cx="478" cy="143" r="15.6" fill="url(#hb)"/><circle cx="466" cy="182" r="16.9" fill="url(#hb)"/><circle cx="492" cy="207" r="18.2" fill="url(#hb)"/><circle cx="585" cy="183" r="19.5" fill="url(#hp)"/><circle cx="597" cy="214" r="14.3" fill="url(#hb)"/><circle cx="627" cy="229" r="13.0" fill="url(#hb)"/><circle cx="648" cy="247" r="15.6" fill="url(#hb)"/><circle cx="515" cy="239" r="13.0" fill="url(#hb)"/><circle cx="603" cy="277" r="13.0" fill="url(#hb)"/><circle cx="703" cy="132" r="19.5" fill="url(#hm)"/><circle cx="675" cy="221" r="19.5" fill="url(#hp)"/><circle cx="753" cy="168" r="16.9" fill="url(#hb)"/><circle cx="756" cy="202" r="16.9" fill="url(#hb)"/><circle cx="788" cy="202" r="16.9" fill="url(#hb)"/><circle cx="864" cy="166" r="18.2" fill="url(#hp)"/><circle cx="801" cy="130" r="15.6" fill="url(#hb)"/><circle cx="733" cy="269" r="18.2" fill="url(#hm)"/><circle cx="748" cy="293" r="16.9" fill="url(#hm)"/><circle cx="833" cy="290" r="19.5" fill="url(#hm)"/><circle cx="673" cy="299" r="18.2" fill="url(#hp)"/><circle cx="655" cy="276" r="15.6" fill="url(#hb)"/><circle cx="670" cy="357" r="19.5" fill="url(#hm)"/><circle cx="655" cy="391" r="16.9" fill="url(#hp)"/><circle cx="609" cy="348" r="15.6" fill="url(#hb)"/><circle cx="560" cy="329" r="19.5" fill="url(#hm)"/><circle cx="529" cy="342" r="15.6" fill="url(#hb)"/><circle cx="511" cy="397" r="15.6" fill="url(#hb)"/><circle cx="450" cy="279" r="19.5" fill="url(#hp)"/><circle cx="420" cy="316" r="14.3" fill="url(#hb)"/><circle cx="454" cy="348" r="18.2" fill="url(#hm)"/><circle cx="489" cy="365" r="16.9" fill="url(#hp)"/><circle cx="468" cy="394" r="16.9" fill="url(#hb)"/><circle cx="463" cy="420" r="15.6" fill="url(#hb)"/><circle cx="725" cy="371" r="13.0" fill="url(#hb)"/><circle cx="815" cy="325" r="13.0" fill="url(#hb)"/><circle cx="840" cy="210" r="15.6" fill="url(#hb)"/><circle cx="690" cy="330" r="11.7" fill="url(#hb)"/><circle cx="560" cy="250" r="11.7" fill="url(#hb)"/><circle cx="474.7" cy="268.3" r="22" fill="url(#hb)"/><circle cx="474.7" cy="268.3" r="14.8" fill="url(#hs)"/><circle cx="476" cy="269.3" r="2.6" fill="none" stroke="#c8b820" stroke-width="0.8"/><circle cx="476" cy="269.3" r="0.8" fill="#c8b820"/><circle cx="597.1" cy="334.1" r="20" fill="url(#hb)"/><circle cx="597.1" cy="334.1" r="14.5" fill="url(#hw)"/><circle cx="870" cy="208.7" r="20" fill="url(#hb)"/><circle cx="870" cy="208.7" r="14.5" fill="url(#hw)"/>
<rect x="974" y="93" width="63" height="32" fill="#333" fill-opacity="0.97"/>
<path d="M984.6,116.6 V109.3 L983,109.3 L990,102.2 L997,109.3 L995.8,109.3 V116.6 H992.6 V111 H987.9 V116.6 Z M985.6,107.6 V102.4 H987.6 V105.4" fill="none" stroke="#d4d4d4" stroke-width="0.9" stroke-linejoin="round"/><rect x="1014.3" y="102" width="2.2" height="2.2" fill="none" stroke="#d4d4d4" stroke-width="0.7"/><rect x="1014.3" y="105.8" width="2.2" height="2.2" fill="none" stroke="#d4d4d4" stroke-width="0.7"/><rect x="1014.3" y="109.6" width="2.2" height="2.2" fill="#d4d4d4"/><path d="M1014.1,115.2 L1015.4,112.8 L1016.7,115.2 Z" fill="#d4d4d4"/><rect x="1018.9" y="102.3" width="8.2" height="1.5" fill="#d4d4d4"/><rect x="1018.9" y="106.2" width="8.2" height="1.5" fill="#d4d4d4"/><rect x="1018.9" y="110.0" width="8.2" height="1.2" fill="#d4d4d4"/><rect x="1018.9" y="113.8" width="8.2" height="1.2" fill="#d4d4d4"/>
<rect x="1007.5" y="346.5" width="29" height="55" fill="#333" fill-opacity="0.97"/>
<path d="M1015.5,361.5 H1028 M1021.75,355.3 V367.7 M1015.5,386.5 H1028" stroke="#d8d8d8" stroke-width="1.5"/>
<rect x="733" y="407" width="301" height="13.5" fill="#ffffff" fill-opacity="0.6"/>
<text x="737" y="418" font-size="11.5" letter-spacing="0.38" fill="#5a5a5a">Map data © OpenStreetMap contributors, CC-BY-SA</text>
</svg>

<!-- carousel bar -->
<div class="a" style="left:248px;top:426px;width:787px;height:27px;background:#202020;border-left:1px solid #333;border-bottom:1px solid #333"></div>
<svg class="a" style="left:248px;top:426px" width="787" height="27" viewBox="248 426 787 27">
<path d="M265,432.5 L258.5,438.6 L265,444.7 Z" fill="none" stroke="#c8c8c8" stroke-width="1.2"/>
<path d="M1017,432.5 L1023.5,438.6 L1017,444.7 Z" fill="none" stroke="#c8c8c8" stroke-width="1.2"/>
</svg>
<div class="t" style="left:548.5px;top:432.5px;font-size:12.1px;color:#cfcfcf;letter-spacing:0px">Концентрация на карантинирани</div>

<!-- chart panel -->
<div class="panel" style="left:237px;top:464px;width:808px;height:117px"></div>
<div class="t" style="left:243px;top:473px;font-size:13.8px;color:#cfcfcf">Брой заболели по дни</div>
<svg class="a" style="left:238px;top:490px" width="806" height="90" viewBox="238 490 806 90" font-family="Liberation Sans">
<line x1="286" y1="513.5" x2="1015" y2="513.5" stroke="#4a4a4a" stroke-width="1" stroke-dasharray="3,3"/><line x1="286" y1="525.8" x2="1015" y2="525.8" stroke="#4a4a4a" stroke-width="1" stroke-dasharray="3,3"/><line x1="286" y1="538.2" x2="1015" y2="538.2" stroke="#4a4a4a" stroke-width="1" stroke-dasharray="3,3"/><line x1="400.3" y1="511" x2="400.3" y2="556" stroke="#4a4a4a" stroke-width="1" stroke-dasharray="3,3"/><line x1="529.5" y1="511" x2="529.5" y2="556" stroke="#4a4a4a" stroke-width="1" stroke-dasharray="3,3"/><line x1="660.5" y1="511" x2="660.5" y2="556" stroke="#4a4a4a" stroke-width="1" stroke-dasharray="3,3"/><line x1="790.9" y1="511" x2="790.9" y2="556" stroke="#4a4a4a" stroke-width="1" stroke-dasharray="3,3"/><line x1="920.4" y1="511" x2="920.4" y2="556" stroke="#4a4a4a" stroke-width="1" stroke-dasharray="3,3"/><line x1="285.8" y1="513" x2="285.8" y2="551" stroke="#6a6a6a" stroke-width="1"/><line x1="286" y1="550.7" x2="1015" y2="550.7" stroke="#6a6a6a" stroke-width="1"/><line x1="280" y1="513.5" x2="286" y2="513.5" stroke="#6a6a6a" stroke-width="1"/><text x="274" y="517.3" text-anchor="end" font-size="10.8" fill="#b8b8b8">6k</text><line x1="280" y1="525.8" x2="286" y2="525.8" stroke="#6a6a6a" stroke-width="1"/><text x="274" y="529.5999999999999" text-anchor="end" font-size="10.8" fill="#b8b8b8">4k</text><line x1="280" y1="538.2" x2="286" y2="538.2" stroke="#6a6a6a" stroke-width="1"/><text x="274" y="542.0" text-anchor="end" font-size="10.8" fill="#b8b8b8">2k</text><line x1="280" y1="550.5" x2="286" y2="550.5" stroke="#6a6a6a" stroke-width="1"/><text x="274" y="554.3" text-anchor="end" font-size="10.8" fill="#b8b8b8">0</text>
<g fill="#f6aa05"><rect x="284.61" y="550.15" width="2.2" height="0.35"/><rect x="286.73" y="550.38" width="2.2" height="0.12"/><rect x="288.86" y="550.13" width="2.2" height="0.37"/><rect x="290.98" y="550.13" width="2.2" height="0.37"/><rect x="293.10" y="550.12" width="2.2" height="0.38"/><rect x="295.22" y="550.12" width="2.2" height="0.38"/><rect x="297.35" y="550.13" width="2.2" height="0.37"/><rect x="299.47" y="550.13" width="2.2" height="0.37"/><rect x="301.59" y="550.37" width="2.2" height="0.13"/><rect x="303.72" y="550.12" width="2.2" height="0.38"/><rect x="305.84" y="550.12" width="2.2" height="0.38"/><rect x="307.96" y="550.11" width="2.2" height="0.39"/><rect x="310.08" y="550.11" width="2.2" height="0.39"/><rect x="312.21" y="550.10" width="2.2" height="0.40"/><rect x="314.33" y="550.13" width="2.2" height="0.37"/><rect x="316.45" y="550.37" width="2.2" height="0.13"/><rect x="318.58" y="550.11" width="2.2" height="0.39"/><rect x="320.70" y="550.09" width="2.2" height="0.41"/><rect x="322.82" y="550.09" width="2.2" height="0.41"/><rect x="324.95" y="550.09" width="2.2" height="0.41"/><rect x="327.07" y="550.08" width="2.2" height="0.42"/><rect x="329.19" y="550.11" width="2.2" height="0.39"/><rect x="331.31" y="550.36" width="2.2" height="0.14"/><rect x="333.44" y="550.10" width="2.2" height="0.40"/><rect x="335.56" y="550.09" width="2.2" height="0.41"/><rect x="337.68" y="550.08" width="2.2" height="0.42"/><rect x="339.81" y="550.08" width="2.2" height="0.42"/><rect x="341.93" y="550.07" width="2.2" height="0.43"/><rect x="344.05" y="550.10" width="2.2" height="0.40"/><rect x="346.17" y="550.36" width="2.2" height="0.14"/><rect x="348.30" y="550.08" width="2.2" height="0.42"/><rect x="350.42" y="550.07" width="2.2" height="0.43"/><rect x="352.54" y="550.06" width="2.2" height="0.44"/><rect x="354.67" y="550.07" width="2.2" height="0.43"/><rect x="356.79" y="550.07" width="2.2" height="0.43"/><rect x="358.91" y="550.08" width="2.2" height="0.42"/><rect x="361.03" y="550.35" width="2.2" height="0.15"/><rect x="363.16" y="550.07" width="2.2" height="0.43"/><rect x="365.28" y="550.05" width="2.2" height="0.45"/><rect x="367.40" y="550.04" width="2.2" height="0.46"/><rect x="369.53" y="550.05" width="2.2" height="0.45"/><rect x="371.65" y="550.05" width="2.2" height="0.45"/><rect x="373.77" y="550.06" width="2.2" height="0.44"/><rect x="375.89" y="550.35" width="2.2" height="0.15"/><rect x="378.02" y="550.06" width="2.2" height="0.44"/><rect x="380.14" y="550.04" width="2.2" height="0.46"/><rect x="382.26" y="550.03" width="2.2" height="0.47"/><rect x="384.39" y="550.03" width="2.2" height="0.47"/><rect x="386.51" y="550.03" width="2.2" height="0.47"/><rect x="388.63" y="550.06" width="2.2" height="0.44"/><rect x="390.75" y="550.34" width="2.2" height="0.16"/><rect x="392.88" y="550.05" width="2.2" height="0.45"/><rect x="395.00" y="550.02" width="2.2" height="0.48"/><rect x="397.12" y="550.01" width="2.2" height="0.49"/><rect x="399.25" y="550.02" width="2.2" height="0.48"/><rect x="401.37" y="550.02" width="2.2" height="0.48"/><rect x="403.49" y="550.05" width="2.2" height="0.45"/><rect x="405.62" y="550.34" width="2.2" height="0.16"/><rect x="407.74" y="550.02" width="2.2" height="0.48"/><rect x="409.86" y="550.01" width="2.2" height="0.49"/><rect x="411.98" y="549.99" width="2.2" height="0.51"/><rect x="414.11" y="550.01" width="2.2" height="0.49"/><rect x="416.23" y="550.00" width="2.2" height="0.50"/><rect x="418.35" y="550.02" width="2.2" height="0.48"/><rect x="420.48" y="550.33" width="2.2" height="0.17"/><rect x="422.60" y="550.01" width="2.2" height="0.49"/><rect x="424.72" y="549.99" width="2.2" height="0.51"/><rect x="426.84" y="549.98" width="2.2" height="0.52"/><rect x="428.97" y="549.99" width="2.2" height="0.51"/><rect x="431.09" y="549.99" width="2.2" height="0.51"/><rect x="433.21" y="550.02" width="2.2" height="0.48"/><rect x="435.34" y="550.33" width="2.2" height="0.17"/><rect x="437.46" y="549.99" width="2.2" height="0.51"/><rect x="439.58" y="549.97" width="2.2" height="0.53"/><rect x="441.70" y="549.96" width="2.2" height="0.54"/><rect x="443.83" y="549.98" width="2.2" height="0.52"/><rect x="445.95" y="549.98" width="2.2" height="0.52"/><rect x="448.07" y="549.99" width="2.2" height="0.51"/><rect x="450.20" y="550.33" width="2.2" height="0.17"/><rect x="452.32" y="549.98" width="2.2" height="0.52"/><rect x="454.44" y="549.97" width="2.2" height="0.53"/><rect x="456.56" y="549.96" width="2.2" height="0.54"/><rect x="458.69" y="549.97" width="2.2" height="0.53"/><rect x="460.81" y="549.96" width="2.2" height="0.54"/><rect x="462.93" y="549.99" width="2.2" height="0.51"/><rect x="465.06" y="550.32" width="2.2" height="0.18"/><rect x="467.18" y="549.97" width="2.2" height="0.53"/><rect x="469.30" y="549.94" width="2.2" height="0.56"/><rect x="471.43" y="549.95" width="2.2" height="0.55"/><rect x="473.55" y="549.95" width="2.2" height="0.55"/><rect x="475.67" y="549.75" width="2.2" height="0.75"/><rect x="477.79" y="549.58" width="2.2" height="0.92"/><rect x="479.92" y="550.12" width="2.2" height="0.38"/><rect x="482.04" y="549.18" width="2.2" height="1.32"/><rect x="484.16" y="548.97" width="2.2" height="1.53"/><rect x="486.29" y="548.92" width="2.2" height="1.58"/><rect x="488.41" y="548.90" width="2.2" height="1.60"/><rect x="490.53" y="548.85" width="2.2" height="1.65"/><rect x="492.65" y="548.88" width="2.2" height="1.62"/><rect x="494.78" y="549.95" width="2.2" height="0.55"/><rect x="496.90" y="548.84" width="2.2" height="1.66"/><rect x="499.02" y="548.75" width="2.2" height="1.75"/><rect x="501.15" y="548.70" width="2.2" height="1.80"/><rect x="503.27" y="548.67" width="2.2" height="1.83"/><rect x="505.39" y="548.65" width="2.2" height="1.85"/><rect x="507.51" y="548.71" width="2.2" height="1.79"/><rect x="509.64" y="549.88" width="2.2" height="0.62"/><rect x="511.76" y="548.60" width="2.2" height="1.90"/><rect x="513.88" y="548.52" width="2.2" height="1.98"/><rect x="516.01" y="548.45" width="2.2" height="2.05"/><rect x="518.13" y="548.40" width="2.2" height="2.10"/><rect x="520.25" y="548.41" width="2.2" height="2.09"/><rect x="522.37" y="548.48" width="2.2" height="2.02"/><rect x="524.50" y="549.79" width="2.2" height="0.71"/><rect x="526.62" y="548.36" width="2.2" height="2.14"/><rect x="528.74" y="548.32" width="2.2" height="2.18"/><rect x="530.87" y="548.22" width="2.2" height="2.28"/><rect x="532.99" y="548.25" width="2.2" height="2.25"/><rect x="535.11" y="548.26" width="2.2" height="2.24"/><rect x="537.24" y="548.35" width="2.2" height="2.15"/><rect x="539.36" y="549.76" width="2.2" height="0.74"/><rect x="541.48" y="548.33" width="2.2" height="2.17"/><rect x="543.60" y="548.29" width="2.2" height="2.21"/><rect x="545.73" y="548.21" width="2.2" height="2.29"/><rect x="547.85" y="548.28" width="2.2" height="2.22"/><rect x="549.97" y="548.30" width="2.2" height="2.20"/><rect x="552.10" y="548.37" width="2.2" height="2.13"/><rect x="554.22" y="549.76" width="2.2" height="0.74"/><rect x="556.34" y="548.31" width="2.2" height="2.19"/><rect x="558.46" y="548.26" width="2.2" height="2.24"/><rect x="560.59" y="548.24" width="2.2" height="2.26"/><rect x="562.71" y="548.25" width="2.2" height="2.25"/><rect x="564.83" y="548.27" width="2.2" height="2.23"/><rect x="566.96" y="548.33" width="2.2" height="2.17"/><rect x="569.08" y="549.76" width="2.2" height="0.74"/><rect x="571.20" y="548.23" width="2.2" height="2.27"/><rect x="573.32" y="548.18" width="2.2" height="2.32"/><rect x="575.45" y="548.20" width="2.2" height="2.30"/><rect x="577.57" y="548.21" width="2.2" height="2.29"/><rect x="579.69" y="548.22" width="2.2" height="2.28"/><rect x="581.82" y="548.31" width="2.2" height="2.19"/><rect x="583.94" y="549.74" width="2.2" height="0.76"/><rect x="586.06" y="548.21" width="2.2" height="2.29"/><rect x="588.18" y="548.12" width="2.2" height="2.38"/><rect x="590.31" y="548.14" width="2.2" height="2.36"/><rect x="592.43" y="548.16" width="2.2" height="2.34"/><rect x="594.55" y="548.21" width="2.2" height="2.29"/><rect x="596.68" y="548.30" width="2.2" height="2.20"/><rect x="598.80" y="549.73" width="2.2" height="0.77"/><rect x="600.92" y="548.23" width="2.2" height="2.27"/><rect x="603.05" y="548.11" width="2.2" height="2.39"/><rect x="605.17" y="548.14" width="2.2" height="2.36"/><rect x="607.29" y="548.17" width="2.2" height="2.33"/><rect x="609.41" y="548.11" width="2.2" height="2.39"/><rect x="611.54" y="548.24" width="2.2" height="2.26"/><rect x="613.66" y="549.72" width="2.2" height="0.78"/><rect x="615.78" y="548.18" width="2.2" height="2.32"/><rect x="617.91" y="548.15" width="2.2" height="2.35"/><rect x="620.03" y="548.08" width="2.2" height="2.42"/><rect x="622.15" y="548.05" width="2.2" height="2.45"/><rect x="624.27" y="548.08" width="2.2" height="2.42"/><rect x="626.40" y="548.20" width="2.2" height="2.30"/><rect x="628.52" y="549.72" width="2.2" height="0.78"/><rect x="630.64" y="548.18" width="2.2" height="2.32"/><rect x="632.77" y="548.13" width="2.2" height="2.37"/><rect x="634.89" y="548.05" width="2.2" height="2.45"/><rect x="637.01" y="548.10" width="2.2" height="2.40"/><rect x="639.13" y="548.10" width="2.2" height="2.40"/><rect x="641.26" y="548.24" width="2.2" height="2.26"/><rect x="643.38" y="549.72" width="2.2" height="0.78"/><rect x="645.50" y="548.15" width="2.2" height="2.35"/><rect x="647.63" y="548.07" width="2.2" height="2.43"/><rect x="649.75" y="548.06" width="2.2" height="2.44"/><rect x="651.87" y="548.09" width="2.2" height="2.41"/><rect x="653.99" y="548.11" width="2.2" height="2.39"/><rect x="656.12" y="548.22" width="2.2" height="2.28"/><rect x="658.24" y="549.72" width="2.2" height="0.78"/><rect x="660.36" y="548.19" width="2.2" height="2.31"/><rect x="662.49" y="548.14" width="2.2" height="2.36"/><rect x="664.61" y="548.15" width="2.2" height="2.35"/><rect x="666.73" y="548.17" width="2.2" height="2.33"/><rect x="668.85" y="548.18" width="2.2" height="2.32"/><rect x="670.98" y="548.27" width="2.2" height="2.23"/><rect x="673.10" y="549.71" width="2.2" height="0.79"/><rect x="675.22" y="548.17" width="2.2" height="2.33"/><rect x="677.35" y="548.14" width="2.2" height="2.36"/><rect x="679.47" y="548.07" width="2.2" height="2.43"/><rect x="681.59" y="548.10" width="2.2" height="2.40"/><rect x="683.72" y="548.12" width="2.2" height="2.38"/><rect x="685.84" y="548.27" width="2.2" height="2.23"/><rect x="687.96" y="549.73" width="2.2" height="0.77"/><rect x="690.08" y="548.24" width="2.2" height="2.26"/><rect x="692.21" y="548.18" width="2.2" height="2.32"/><rect x="694.33" y="548.16" width="2.2" height="2.34"/><rect x="696.45" y="548.14" width="2.2" height="2.36"/><rect x="698.58" y="548.14" width="2.2" height="2.36"/><rect x="700.70" y="548.24" width="2.2" height="2.26"/><rect x="702.82" y="549.69" width="2.2" height="0.81"/><rect x="704.94" y="547.97" width="2.2" height="2.53"/><rect x="707.07" y="547.75" width="2.2" height="2.75"/><rect x="709.19" y="547.68" width="2.2" height="2.82"/><rect x="711.31" y="547.52" width="2.2" height="2.98"/><rect x="713.44" y="547.40" width="2.2" height="3.10"/><rect x="715.56" y="547.42" width="2.2" height="3.08"/><rect x="717.68" y="549.39" width="2.2" height="1.11"/><rect x="719.80" y="547.15" width="2.2" height="3.35"/><rect x="721.93" y="546.97" width="2.2" height="3.53"/><rect x="724.05" y="546.72" width="2.2" height="3.78"/><rect x="726.17" y="546.47" width="2.2" height="4.03"/><rect x="728.30" y="546.09" width="2.2" height="4.41"/><rect x="730.42" y="545.90" width="2.2" height="4.60"/><rect x="732.54" y="548.82" width="2.2" height="1.68"/><rect x="734.66" y="545.22" width="2.2" height="5.28"/><rect x="736.79" y="544.58" width="2.2" height="5.92"/><rect x="738.91" y="544.22" width="2.2" height="6.28"/><rect x="741.03" y="544.13" width="2.2" height="6.37"/><rect x="743.16" y="543.93" width="2.2" height="6.57"/><rect x="745.28" y="543.92" width="2.2" height="6.58"/><rect x="747.40" y="548.05" width="2.2" height="2.45"/><rect x="749.53" y="543.05" width="2.2" height="7.45"/><rect x="751.65" y="542.74" width="2.2" height="7.76"/><rect x="753.77" y="542.15" width="2.2" height="8.35"/><rect x="755.89" y="541.89" width="2.2" height="8.61"/><rect x="758.02" y="541.80" width="2.2" height="8.70"/><rect x="760.14" y="541.99" width="2.2" height="8.51"/><rect x="762.26" y="547.43" width="2.2" height="3.07"/><rect x="764.39" y="541.34" width="2.2" height="9.16"/><rect x="766.51" y="540.83" width="2.2" height="9.67"/><rect x="768.63" y="539.32" width="2.2" height="11.18"/><rect x="770.75" y="538.56" width="2.2" height="11.94"/><rect x="772.88" y="537.74" width="2.2" height="12.76"/><rect x="775.00" y="537.09" width="2.2" height="13.41"/><rect x="777.12" y="545.60" width="2.2" height="4.90"/><rect x="779.25" y="534.87" width="2.2" height="15.63"/><rect x="781.37" y="533.40" width="2.2" height="17.10"/><rect x="783.49" y="532.65" width="2.2" height="17.85"/><rect x="785.61" y="531.08" width="2.2" height="19.42"/><rect x="787.74" y="529.55" width="2.2" height="20.95"/><rect x="789.86" y="528.82" width="2.2" height="21.68"/><rect x="791.98" y="542.29" width="2.2" height="8.21"/><rect x="794.11" y="525.03" width="2.2" height="25.47"/><rect x="796.23" y="524.04" width="2.2" height="26.46"/><rect x="798.35" y="524.06" width="2.2" height="26.44"/><rect x="800.47" y="523.47" width="2.2" height="27.03"/><rect x="802.60" y="524.30" width="2.2" height="26.20"/><rect x="804.72" y="525.23" width="2.2" height="25.27"/><rect x="806.84" y="541.67" width="2.2" height="8.83"/><rect x="808.97" y="524.19" width="2.2" height="26.31"/><rect x="811.09" y="523.87" width="2.2" height="26.63"/><rect x="813.21" y="523.04" width="2.2" height="27.46"/><rect x="815.34" y="523.73" width="2.2" height="26.77"/><rect x="817.46" y="523.95" width="2.2" height="26.55"/><rect x="819.58" y="525.00" width="2.2" height="25.50"/><rect x="821.70" y="541.81" width="2.2" height="8.69"/><rect x="823.83" y="524.51" width="2.2" height="25.99"/><rect x="825.95" y="523.95" width="2.2" height="26.55"/><rect x="828.07" y="523.86" width="2.2" height="26.64"/><rect x="830.20" y="523.24" width="2.2" height="27.26"/><rect x="832.32" y="524.16" width="2.2" height="26.34"/><rect x="834.44" y="524.89" width="2.2" height="25.61"/><rect x="836.56" y="541.51" width="2.2" height="8.99"/><rect x="838.69" y="524.22" width="2.2" height="26.28"/><rect x="840.81" y="523.63" width="2.2" height="26.87"/><rect x="842.93" y="523.13" width="2.2" height="27.37"/><rect x="845.06" y="523.33" width="2.2" height="27.17"/><rect x="847.18" y="523.33" width="2.2" height="27.17"/><rect x="849.30" y="527.44" width="2.2" height="23.06"/><rect x="851.42" y="543.16" width="2.2" height="7.34"/><rect x="853.55" y="531.55" width="2.2" height="18.95"/><rect x="855.67" y="531.07" width="2.2" height="19.43"/><rect x="857.79" y="530.62" width="2.2" height="19.88"/><rect x="859.92" y="531.16" width="2.2" height="19.34"/><rect x="862.04" y="531.44" width="2.2" height="19.06"/><rect x="864.16" y="532.19" width="2.2" height="18.31"/><rect x="866.28" y="544.15" width="2.2" height="6.35"/><rect x="868.41" y="532.30" width="2.2" height="18.20"/><rect x="870.53" y="531.74" width="2.2" height="18.76"/><rect x="872.65" y="531.77" width="2.2" height="18.73"/><rect x="874.78" y="532.08" width="2.2" height="18.42"/><rect x="876.90" y="532.26" width="2.2" height="18.24"/><rect x="879.02" y="533.29" width="2.2" height="17.21"/><rect x="881.14" y="544.55" width="2.2" height="5.95"/><rect x="883.27" y="533.17" width="2.2" height="17.33"/><rect x="885.39" y="533.97" width="2.2" height="16.53"/><rect x="887.51" y="535.64" width="2.2" height="14.86"/><rect x="889.64" y="537.35" width="2.2" height="13.15"/><rect x="891.76" y="537.59" width="2.2" height="12.91"/><rect x="893.88" y="538.57" width="2.2" height="11.93"/><rect x="896.01" y="546.35" width="2.2" height="4.15"/><rect x="898.13" y="538.26" width="2.2" height="12.24"/><rect x="900.25" y="538.07" width="2.2" height="12.43"/><rect x="902.37" y="538.43" width="2.2" height="12.07"/><rect x="904.50" y="538.69" width="2.2" height="11.81"/><rect x="906.62" y="538.79" width="2.2" height="11.71"/><rect x="908.74" y="539.56" width="2.2" height="10.94"/><rect x="910.87" y="547.21" width="2.2" height="3.29"/><rect x="912.99" y="542.46" width="2.2" height="8.04"/><rect x="915.11" y="543.67" width="2.2" height="6.83"/><rect x="917.23" y="543.60" width="2.2" height="6.90"/><rect x="919.36" y="543.67" width="2.2" height="6.83"/><rect x="921.48" y="543.97" width="2.2" height="6.53"/><rect x="923.60" y="544.12" width="2.2" height="6.38"/><rect x="925.73" y="548.30" width="2.2" height="2.20"/><rect x="927.85" y="544.19" width="2.2" height="6.31"/><rect x="929.97" y="543.83" width="2.2" height="6.67"/><rect x="932.09" y="543.77" width="2.2" height="6.73"/><rect x="934.22" y="544.07" width="2.2" height="6.43"/><rect x="936.34" y="543.97" width="2.2" height="6.53"/><rect x="938.46" y="544.40" width="2.2" height="6.10"/><rect x="940.59" y="548.38" width="2.2" height="2.12"/><rect x="942.71" y="544.19" width="2.2" height="6.31"/><rect x="944.83" y="544.06" width="2.2" height="6.44"/><rect x="946.95" y="544.20" width="2.2" height="6.30"/><rect x="949.08" y="544.23" width="2.2" height="6.27"/><rect x="951.20" y="544.30" width="2.2" height="6.20"/><rect x="953.32" y="544.62" width="2.2" height="5.88"/><rect x="955.45" y="548.48" width="2.2" height="2.02"/><rect x="957.57" y="544.56" width="2.2" height="5.94"/><rect x="959.69" y="544.24" width="2.2" height="6.26"/><rect x="961.82" y="544.32" width="2.2" height="6.18"/><rect x="963.94" y="544.21" width="2.2" height="6.29"/><rect x="966.06" y="544.26" width="2.2" height="6.24"/><rect x="968.18" y="544.58" width="2.2" height="5.92"/><rect x="970.31" y="548.41" width="2.2" height="2.09"/><rect x="972.43" y="544.24" width="2.2" height="6.26"/><rect x="974.55" y="544.03" width="2.2" height="6.47"/><rect x="976.68" y="544.05" width="2.2" height="6.45"/><rect x="978.80" y="543.84" width="2.2" height="6.66"/><rect x="980.92" y="543.92" width="2.2" height="6.58"/><rect x="983.04" y="544.10" width="2.2" height="6.40"/><rect x="985.17" y="548.34" width="2.2" height="2.16"/><rect x="987.29" y="544.08" width="2.2" height="6.42"/><rect x="989.41" y="543.90" width="2.2" height="6.60"/><rect x="991.54" y="543.60" width="2.2" height="6.90"/><rect x="993.66" y="543.77" width="2.2" height="6.73"/><rect x="995.78" y="543.84" width="2.2" height="6.66"/><rect x="997.90" y="543.99" width="2.2" height="6.51"/><rect x="1000.03" y="548.18" width="2.2" height="2.32"/><rect x="1002.15" y="543.68" width="2.2" height="6.82"/><rect x="1004.27" y="543.59" width="2.2" height="6.91"/><rect x="1006.40" y="543.51" width="2.2" height="6.99"/><rect x="1008.52" y="543.33" width="2.2" height="7.17"/><rect x="1010.64" y="543.46" width="2.2" height="7.04"/></g>
<g font-size="10" fill="#c8c8c8" stroke="#2a2a2a" stroke-width="0.6" paint-order="stroke" text-anchor="middle"><text x="285.7" y="547.0">57</text><text x="287.8" y="547.2">20</text><text x="289.9" y="546.9">59</text><text x="292.0" y="546.9">60</text><text x="294.2" y="546.9">62</text><text x="296.3" y="546.9">61</text><text x="298.4" y="546.9">60</text><text x="300.5" y="546.9">59</text><text x="302.6" y="547.2">20</text><text x="304.8" y="546.9">61</text><text x="306.9" y="546.9">62</text><text x="309.0" y="546.9">63</text><text x="311.1" y="546.9">64</text><text x="313.3" y="546.9">65</text><text x="315.4" y="546.9">61</text><text x="317.5" y="547.2">21</text><text x="319.6" y="546.9">64</text><text x="321.7" y="546.9">67</text><text x="323.9" y="546.9">67</text><text x="326.0" y="546.9">66</text><text x="328.1" y="546.9">67</text><text x="330.2" y="546.9">63</text><text x="332.4" y="547.2">23</text><text x="334.5" y="546.9">65</text><text x="336.6" y="546.9">67</text><text x="338.7" y="546.9">68</text><text x="340.9" y="546.9">68</text><text x="343.0" y="546.9">69</text><text x="345.1" y="546.9">65</text><text x="347.2" y="547.2">23</text><text x="349.3" y="546.9">68</text><text x="351.5" y="546.9">70</text><text x="353.6" y="546.9">72</text><text x="355.7" y="546.9">70</text><text x="357.8" y="546.9">69</text><text x="360.0" y="546.9">67</text><text x="362.1" y="547.2">24</text><text x="364.2" y="546.9">70</text><text x="366.3" y="546.9">72</text><text x="368.5" y="546.8">74</text><text x="370.6" y="546.8">73</text><text x="372.7" y="546.9">72</text><text x="374.8" y="546.9">71</text><text x="376.9" y="547.1">25</text><text x="379.1" y="546.9">72</text><text x="381.2" y="546.8">75</text><text x="383.3" y="546.8">76</text><text x="385.4" y="546.8">77</text><text x="387.6" y="546.8">76</text><text x="389.7" y="546.9">72</text><text x="391.8" y="547.1">26</text><text x="393.9" y="546.8">74</text><text x="396.1" y="546.8">77</text><text x="398.2" y="546.8">79</text><text x="400.3" y="546.8">77</text><text x="402.4" y="546.8">78</text><text x="404.5" y="546.8">74</text><text x="406.7" y="547.1">26</text><text x="408.8" y="546.8">78</text><text x="410.9" y="546.8">80</text><text x="413.0" y="546.8">82</text><text x="415.2" y="546.8">80</text><text x="417.3" y="546.8">81</text><text x="419.4" y="546.8">77</text><text x="421.5" y="547.1">27</text><text x="423.6" y="546.8">79</text><text x="425.8" y="546.8">83</text><text x="427.9" y="546.8">85</text><text x="430.0" y="546.8">83</text><text x="432.1" y="546.8">83</text><text x="434.3" y="546.8">78</text><text x="436.4" y="547.1">28</text><text x="438.5" y="546.8">82</text><text x="440.6" y="546.8">86</text><text x="442.8" y="546.8">87</text><text x="444.9" y="546.8">85</text><text x="447.0" y="546.8">84</text><text x="449.1" y="546.8">82</text><text x="451.2" y="547.1">28</text><text x="453.4" y="546.8">84</text><text x="455.5" y="546.8">86</text><text x="457.6" y="546.8">87</text><text x="459.7" y="546.8">86</text><text x="461.9" y="546.8">88</text><text x="464.0" y="546.8">83</text><text x="466.1" y="547.1">29</text><text x="468.2" y="546.8">86</text><text x="470.4" y="546.7">91</text><text x="472.5" y="546.8">89</text><text x="474.6" y="546.7">90</text><text x="476.7" y="546.6">121</text><text x="478.8" y="546.4">149</text><text x="481.0" y="546.9">62</text><text x="483.1" y="546.0">215</text><text x="485.2" y="545.8">248</text><text x="487.3" y="545.7">257</text><text x="489.5" y="545.7">259</text><text x="491.6" y="545.7">267</text><text x="493.7" y="545.7">262</text><text x="495.8" y="546.7">90</text><text x="498.0" y="545.6">269</text><text x="500.1" y="545.6">284</text><text x="502.2" y="545.5">292</text><text x="504.3" y="545.5">297</text><text x="506.4" y="545.4">300</text><text x="508.6" y="545.5">289</text><text x="510.7" y="546.7">101</text><text x="512.8" y="545.4">308</text><text x="514.9" y="545.3">322</text><text x="517.1" y="545.2">333</text><text x="519.2" y="545.2">340</text><text x="521.3" y="545.2">338</text><text x="523.4" y="545.3">327</text><text x="525.5" y="546.6">116</text><text x="527.7" y="545.2">347</text><text x="529.8" y="545.1">354</text><text x="531.9" y="545.0">370</text><text x="534.0" y="545.0">365</text><text x="536.2" y="545.1">364</text><text x="538.3" y="545.2">349</text><text x="540.4" y="546.6">119</text><text x="542.5" y="545.1">352</text><text x="544.7" y="545.1">359</text><text x="546.8" y="545.0">371</text><text x="548.9" y="545.1">360</text><text x="551.0" y="545.1">357</text><text x="553.1" y="545.2">345</text><text x="555.3" y="546.6">120</text><text x="557.4" y="545.1">355</text><text x="559.5" y="545.1">363</text><text x="561.6" y="545.0">366</text><text x="563.8" y="545.0">365</text><text x="565.9" y="545.1">362</text><text x="568.0" y="545.1">351</text><text x="570.1" y="546.6">121</text><text x="572.3" y="545.0">368</text><text x="574.4" y="545.0">376</text><text x="576.5" y="545.0">373</text><text x="578.6" y="545.0">372</text><text x="580.7" y="545.0">370</text><text x="582.9" y="545.1">356</text><text x="585.0" y="546.5">123</text><text x="587.1" y="545.0">372</text><text x="589.2" y="544.9">386</text><text x="591.4" y="544.9">383</text><text x="593.5" y="545.0">380</text><text x="595.6" y="545.0">371</text><text x="597.7" y="545.1">357</text><text x="599.8" y="546.5">125</text><text x="602.0" y="545.0">368</text><text x="604.1" y="544.9">388</text><text x="606.2" y="544.9">383</text><text x="608.3" y="545.0">377</text><text x="610.5" y="544.9">388</text><text x="612.6" y="545.0">367</text><text x="614.7" y="546.5">126</text><text x="616.8" y="545.0">376</text><text x="619.0" y="545.0">381</text><text x="621.1" y="544.9">393</text><text x="623.2" y="544.9">397</text><text x="625.3" y="544.9">392</text><text x="627.4" y="545.0">373</text><text x="629.6" y="546.5">127</text><text x="631.7" y="545.0">375</text><text x="633.8" y="544.9">384</text><text x="635.9" y="544.9">397</text><text x="638.1" y="544.9">389</text><text x="640.2" y="544.9">388</text><text x="642.3" y="545.0">366</text><text x="644.4" y="546.5">126</text><text x="646.6" y="545.0">380</text><text x="648.7" y="544.9">394</text><text x="650.8" y="544.9">396</text><text x="652.9" y="544.9">391</text><text x="655.0" y="544.9">387</text><text x="657.2" y="545.0">370</text><text x="659.3" y="546.5">126</text><text x="661.4" y="545.0">374</text><text x="663.5" y="544.9">383</text><text x="665.7" y="544.9">381</text><text x="667.8" y="545.0">377</text><text x="669.9" y="545.0">377</text><text x="672.0" y="545.1">361</text><text x="674.2" y="546.5">128</text><text x="676.3" y="545.0">379</text><text x="678.4" y="544.9">382</text><text x="680.5" y="544.9">393</text><text x="682.6" y="544.9">390</text><text x="684.8" y="544.9">385</text><text x="686.9" y="545.1">361</text><text x="689.0" y="546.5">125</text><text x="691.1" y="545.0">366</text><text x="693.3" y="545.0">376</text><text x="695.4" y="545.0">380</text><text x="697.5" y="544.9">382</text><text x="699.6" y="544.9">383</text><text x="701.7" y="545.0">366</text><text x="703.9" y="546.5">132</text><text x="706.0" y="544.8">410</text><text x="708.1" y="544.6">445</text><text x="710.2" y="544.5">457</text><text x="712.4" y="544.3">483</text><text x="714.5" y="544.2">503</text><text x="716.6" y="544.2">500</text><text x="718.7" y="546.2">180</text><text x="720.9" y="544.0">543</text><text x="723.0" y="543.8">573</text><text x="725.1" y="543.5">613</text><text x="727.2" y="543.3">653</text><text x="729.3" y="542.9">716</text><text x="731.5" y="542.7">747</text><text x="733.6" y="545.6">272</text><text x="735.7" y="542.0">856</text><text x="737.8" y="541.4">960</text><text x="740.0" y="541.0">1k</text><text x="742.1" y="540.9">1k</text><text x="744.2" y="540.7">1.1k</text><text x="746.3" y="540.7">1.1k</text><text x="748.5" y="544.9">397</text><text x="750.6" y="539.8">1.2k</text><text x="752.7" y="539.5">1.3k</text><text x="754.8" y="539.0">1.4k</text><text x="756.9" y="538.7">1.4k</text><text x="759.1" y="538.6">1.4k</text><text x="761.2" y="538.8">1.4k</text><text x="763.3" y="544.2">499</text><text x="765.4" y="538.1">1.5k</text><text x="767.6" y="537.6">1.6k</text><text x="769.7" y="536.1">1.8k</text><text x="771.8" y="535.4">1.9k</text><text x="773.9" y="534.5">2.1k</text><text x="776.0" y="533.9">2.2k</text><text x="778.2" y="542.4">794</text><text x="780.3" y="531.7">2.5k</text><text x="782.4" y="530.2">2.8k</text><text x="784.5" y="529.4">2.9k</text><text x="786.7" y="527.9">3.1k</text><text x="788.8" y="526.4">3.4k</text><text x="790.9" y="525.6">3.5k</text><text x="793.0" y="539.1">1.3k</text><text x="795.2" y="521.8">4.1k</text><text x="797.3" y="520.8">4.3k</text><text x="799.4" y="520.9">4.3k</text><text x="801.5" y="520.3">4.4k</text><text x="803.6" y="521.1">4.2k</text><text x="805.8" y="522.0">4.1k</text><text x="807.9" y="538.5">1.4k</text><text x="810.0" y="521.0">4.3k</text><text x="812.1" y="520.7">4.3k</text><text x="814.3" y="519.8">4.5k</text><text x="816.4" y="520.5">4.3k</text><text x="818.5" y="520.7">4.3k</text><text x="820.6" y="521.8">4.1k</text><text x="822.8" y="538.6">1.4k</text><text x="824.9" y="521.3">4.2k</text><text x="827.0" y="520.8">4.3k</text><text x="829.1" y="520.7">4.3k</text><text x="831.2" y="520.0">4.4k</text><text x="833.4" y="521.0">4.3k</text><text x="835.5" y="521.7">4.2k</text><text x="837.6" y="538.3">1.5k</text><text x="839.7" y="521.0">4.3k</text><text x="841.9" y="520.4">4.4k</text><text x="844.0" y="519.9">4.4k</text><text x="846.1" y="520.1">4.4k</text><text x="848.2" y="520.1">4.4k</text><text x="850.4" y="524.2">3.7k</text><text x="852.5" y="540.0">1.2k</text><text x="854.6" y="528.4">3.1k</text><text x="856.7" y="527.9">3.2k</text><text x="858.8" y="527.4">3.2k</text><text x="861.0" y="528.0">3.1k</text><text x="863.1" y="528.2">3.1k</text><text x="865.2" y="529.0">3k</text><text x="867.3" y="540.9">1k</text><text x="869.5" y="529.1">3k</text><text x="871.6" y="528.5">3k</text><text x="873.7" y="528.6">3k</text><text x="875.8" y="528.9">3k</text><text x="877.9" y="529.1">3k</text><text x="880.1" y="530.1">2.8k</text><text x="882.2" y="541.3">965</text><text x="884.3" y="530.0">2.8k</text><text x="886.4" y="530.8">2.7k</text><text x="888.6" y="532.4">2.4k</text><text x="890.7" y="534.2">2.1k</text><text x="892.8" y="534.4">2.1k</text><text x="894.9" y="535.4">1.9k</text><text x="897.1" y="543.2">673</text><text x="899.2" y="535.1">2k</text><text x="901.3" y="534.9">2k</text><text x="903.4" y="535.2">2k</text><text x="905.5" y="535.5">1.9k</text><text x="907.7" y="535.6">1.9k</text><text x="909.8" y="536.4">1.8k</text><text x="911.9" y="544.0">533</text><text x="914.0" y="539.3">1.3k</text><text x="916.2" y="540.5">1.1k</text><text x="918.3" y="540.4">1.1k</text><text x="920.4" y="540.5">1.1k</text><text x="922.5" y="540.8">1.1k</text><text x="924.7" y="540.9">1k</text><text x="926.8" y="545.1">357</text><text x="928.9" y="541.0">1k</text><text x="931.0" y="540.6">1.1k</text><text x="933.1" y="540.6">1.1k</text><text x="935.3" y="540.9">1k</text><text x="937.4" y="540.8">1.1k</text><text x="939.5" y="541.2">989</text><text x="941.6" y="545.2">343</text><text x="943.8" y="541.0">1k</text><text x="945.9" y="540.9">1k</text><text x="948.0" y="541.0">1k</text><text x="950.1" y="541.0">1k</text><text x="952.3" y="541.1">1k</text><text x="954.4" y="541.4">953</text><text x="956.5" y="545.3">328</text><text x="958.6" y="541.4">963</text><text x="960.7" y="541.0">1k</text><text x="962.9" y="541.1">1k</text><text x="965.0" y="541.0">1k</text><text x="967.1" y="541.1">1k</text><text x="969.2" y="541.4">960</text><text x="971.4" y="545.2">340</text><text x="973.5" y="541.0">1k</text><text x="975.6" y="540.8">1k</text><text x="977.7" y="540.8">1k</text><text x="979.8" y="540.6">1.1k</text><text x="982.0" y="540.7">1.1k</text><text x="984.1" y="540.9">1k</text><text x="986.2" y="545.1">350</text><text x="988.3" y="540.9">1k</text><text x="990.5" y="540.7">1.1k</text><text x="992.6" y="540.4">1.1k</text><text x="994.7" y="540.6">1.1k</text><text x="996.8" y="540.6">1.1k</text><text x="999.0" y="540.8">1.1k</text><text x="1001.1" y="545.0">376</text><text x="1003.2" y="540.5">1.1k</text><text x="1005.3" y="540.4">1.1k</text><text x="1007.4" y="540.3">1.1k</text><text x="1009.6" y="540.1">1.2k</text><text x="1011.7" y="540.3">1.1k</text></g>
<text x="402.8" y="568" font-size="10.8" font-weight="normal" fill="#b0b0b0">M05</text><text x="532.0" y="568" font-size="10.8" font-weight="normal" fill="#b0b0b0">M07</text><text x="663.0" y="568" font-size="10.8" font-weight="normal" fill="#b0b0b0">M09</text><text x="793.4" y="568" font-size="10.8" font-weight="normal" fill="#b0b0b0">M11</text><text x="922.9" y="568" font-size="10.8" font-weight="bold" fill="#b0b0b0">2021</text>
</svg>

<!-- tabs -->
<div class="a" style="left:250px;top:580px;width:119px;height:27px;background:#222"></div>
<div class="a" style="left:250px;top:605px;width:119px;height:2px;background:#2c6fc8"></div>
<div class="t" style="left:262px;top:589px;font-size:12.1px;color:#cfcfcf">Заболели по дни</div>
<div class="a" style="left:373px;top:580px;width:154px;height:26px;background:#050505;border:1px solid #333;border-top:none"></div>
<div class="t" style="left:385px;top:590px;font-size:11.95px;color:#cfcfcf">Заболели с натрупване</div>
<div class="a" style="left:532px;top:580px;width:151px;height:26px;background:#050505;border:1px solid #333;border-top:none"></div>
<div class="t" style="left:544px;top:589px;font-size:12.15px;color:#cfcfcf">Карантинирани по дни</div>

<!-- right column -->
<div class="a" style="left:1054px;top:57px;width:223px;height:72px;background:#00288a;border:1px solid #34457a"></div>
<div class="a" style="left:1270px;top:57px;width:7px;height:72px;background:#777"></div>
<div class="t c" style="left:1054px;top:63.8px;width:216px;font-size:27.8px;color:#fff">Мобилна</div>
<div class="t c" style="left:1054px;top:97px;width:216px;font-size:27.8px;color:#fff">версия</div>

<div class="panel" style="left:1054px;top:139px;width:223px;height:470px"></div>
<div class="t" style="left:1060px;top:148.5px;font-size:13.9px;color:#cfcfcf">Брой карантинирани по области</div>
<svg class="a" style="left:1054px;top:170px" width="223" height="435" viewBox="1054 170 223 435" font-family="Liberation Sans"><line x1="1154" y1="215.8" x2="1245" y2="215.8" stroke="#4a4a4a" stroke-dasharray="3,3"/><line x1="1154" y1="243.3" x2="1245" y2="243.3" stroke="#4a4a4a" stroke-dasharray="3,3"/><line x1="1154" y1="270.9" x2="1245" y2="270.9" stroke="#4a4a4a" stroke-dasharray="3,3"/><line x1="1154" y1="298.4" x2="1245" y2="298.4" stroke="#4a4a4a" stroke-dasharray="3,3"/><line x1="1154" y1="325.9" x2="1245" y2="325.9" stroke="#4a4a4a" stroke-dasharray="3,3"/><line x1="1154" y1="353.4" x2="1245" y2="353.4" stroke="#4a4a4a" stroke-dasharray="3,3"/><line x1="1154" y1="380.9" x2="1245" y2="380.9" stroke="#4a4a4a" stroke-dasharray="3,3"/><line x1="1154" y1="408.5" x2="1245" y2="408.5" stroke="#4a4a4a" stroke-dasharray="3,3"/><line x1="1154" y1="436.0" x2="1245" y2="436.0" stroke="#4a4a4a" stroke-dasharray="3,3"/><line x1="1154" y1="463.5" x2="1245" y2="463.5" stroke="#4a4a4a" stroke-dasharray="3,3"/><line x1="1154" y1="491.0" x2="1245" y2="491.0" stroke="#4a4a4a" stroke-dasharray="3,3"/><line x1="1154" y1="518.5" x2="1245" y2="518.5" stroke="#4a4a4a" stroke-dasharray="3,3"/><line x1="1154" y1="546.1" x2="1245" y2="546.1" stroke="#4a4a4a" stroke-dasharray="3,3"/><line x1="1245.5" y1="186" x2="1245.5" y2="573" stroke="#4a4a4a" stroke-dasharray="3,3"/><rect x="1154" y="189.3" width="62.7" height="11.8" fill="#f6aa05"/><text x="1219.2" y="200.3" font-size="11" fill="#c4c4c4">137.9k</text><rect x="1154" y="203.1" width="27.9" height="11.8" fill="#f6aa05"/><text x="1184.4" y="214.1" font-size="11" fill="#c4c4c4">61.4k</text><rect x="1154" y="216.8" width="21.2" height="11.8" fill="#f6aa05"/><text x="1177.7" y="227.8" font-size="11" fill="#c4c4c4">46.6k</text><rect x="1154" y="230.6" width="20.4" height="11.8" fill="#f6aa05"/><text x="1176.9" y="241.6" font-size="11" fill="#c4c4c4">44.9k</text><rect x="1154" y="244.3" width="15.0" height="11.8" fill="#f6aa05"/><text x="1171.5" y="255.3" font-size="11" fill="#c4c4c4">32.9k</text><rect x="1154" y="258.1" width="14.3" height="11.8" fill="#f6aa05"/><text x="1170.8" y="269.1" font-size="11" fill="#c4c4c4">31.5k</text><rect x="1154" y="271.9" width="12.0" height="11.8" fill="#f6aa05"/><text x="1168.5" y="282.9" font-size="11" fill="#c4c4c4">26.3k</text><rect x="1154" y="285.6" width="10.7" height="11.8" fill="#f6aa05"/><text x="1167.2" y="296.6" font-size="11" fill="#c4c4c4">23.5k</text><rect x="1154" y="299.4" width="10.1" height="11.8" fill="#f6aa05"/><text x="1166.6" y="310.4" font-size="11" fill="#c4c4c4">22.2k</text><rect x="1154" y="313.1" width="10.0" height="11.8" fill="#f6aa05"/><text x="1166.5" y="324.1" font-size="11" fill="#c4c4c4">22k</text><rect x="1154" y="326.9" width="10.0" height="11.8" fill="#f6aa05"/><text x="1166.5" y="337.9" font-size="11" fill="#c4c4c4">21.9k</text><rect x="1154" y="340.7" width="9.8" height="11.8" fill="#f6aa05"/><text x="1166.3" y="351.7" font-size="11" fill="#c4c4c4">21.5k</text><rect x="1154" y="354.4" width="8.4" height="11.8" fill="#f6aa05"/><text x="1164.9" y="365.4" font-size="11" fill="#c4c4c4">18.4k</text><rect x="1154" y="368.2" width="8.4" height="11.8" fill="#f6aa05"/><text x="1164.9" y="379.2" font-size="11" fill="#c4c4c4">18.4k</text><rect x="1154" y="381.9" width="8.3" height="11.8" fill="#f6aa05"/><text x="1164.8" y="392.9" font-size="11" fill="#c4c4c4">18.2k</text><rect x="1154" y="395.7" width="7.3" height="11.8" fill="#f6aa05"/><text x="1163.8" y="406.7" font-size="11" fill="#c4c4c4">16k</text><rect x="1154" y="409.5" width="6.7" height="11.8" fill="#f6aa05"/><text x="1163.2" y="420.5" font-size="11" fill="#c4c4c4">14.7k</text><rect x="1154" y="423.2" width="6.3" height="11.8" fill="#f6aa05"/><text x="1162.8" y="434.2" font-size="11" fill="#c4c4c4">13.9k</text><rect x="1154" y="437.0" width="6.0" height="11.8" fill="#f6aa05"/><text x="1162.5" y="448.0" font-size="11" fill="#c4c4c4">13.2k</text><rect x="1154" y="450.7" width="5.6" height="11.8" fill="#f6aa05"/><text x="1162.1" y="461.7" font-size="11" fill="#c4c4c4">12.3k</text><rect x="1154" y="464.5" width="5.6" height="11.8" fill="#f6aa05"/><text x="1162.1" y="475.5" font-size="11" fill="#c4c4c4">12.3k</text><rect x="1154" y="478.3" width="5.6" height="11.8" fill="#f6aa05"/><text x="1162.1" y="489.3" font-size="11" fill="#c4c4c4">12.2k</text><rect x="1154" y="492.0" width="5.6" height="11.8" fill="#f6aa05"/><text x="1162.1" y="503.0" font-size="11" fill="#c4c4c4">12.2k</text><rect x="1154" y="505.8" width="5.0" height="11.8" fill="#f6aa05"/><text x="1161.5" y="516.8" font-size="11" fill="#c4c4c4">11k</text><rect x="1154" y="519.5" width="4.5" height="11.8" fill="#f6aa05"/><text x="1161.0" y="530.5" font-size="11" fill="#c4c4c4">10k</text><rect x="1154" y="533.3" width="4.3" height="11.8" fill="#f6aa05"/><text x="1160.8" y="544.3" font-size="11" fill="#c4c4c4">9.4k</text><rect x="1154" y="547.1" width="4.0" height="11.8" fill="#f6aa05"/><text x="1160.5" y="558.1" font-size="11" fill="#c4c4c4">8.7k</text><rect x="1154" y="560.8" width="3.5" height="11.8" fill="#f6aa05"/><text x="1160.0" y="571.8" font-size="11" fill="#c4c4c4">7.7k</text><text x="1142" y="199.2" text-anchor="end" font-size="10.6" fill="#b9b9b9">София-град</text><line x1="1148" y1="195.2" x2="1154" y2="195.2" stroke="#777"/><text x="1142" y="226.7" text-anchor="end" font-size="10.6" fill="#b9b9b9">Варна</text><line x1="1148" y1="222.7" x2="1154" y2="222.7" stroke="#777"/><text x="1142" y="254.2" text-anchor="end" font-size="10.6" fill="#b9b9b9">Благоевград</text><line x1="1148" y1="250.2" x2="1154" y2="250.2" stroke="#777"/><text x="1142" y="281.8" text-anchor="end" font-size="10.6" fill="#b9b9b9">Пазарджик</text><line x1="1148" y1="277.8" x2="1154" y2="277.8" stroke="#777"/><text x="1142" y="309.3" text-anchor="end" font-size="10.6" fill="#b9b9b9">Кърджали</text><line x1="1148" y1="305.3" x2="1154" y2="305.3" stroke="#777"/><text x="1142" y="336.8" text-anchor="end" font-size="10.6" fill="#b9b9b9">Русе</text><line x1="1148" y1="332.8" x2="1154" y2="332.8" stroke="#777"/><text x="1142" y="364.3" text-anchor="end" font-size="10.6" fill="#b9b9b9">София</text><line x1="1148" y1="360.3" x2="1154" y2="360.3" stroke="#777"/><text x="1142" y="391.8" text-anchor="end" font-size="10.6" fill="#b9b9b9">Шумен</text><line x1="1148" y1="387.8" x2="1154" y2="387.8" stroke="#777"/><text x="1142" y="419.4" text-anchor="end" font-size="10.6" fill="#b9b9b9">Враца</text><line x1="1148" y1="415.4" x2="1154" y2="415.4" stroke="#777"/><text x="1142" y="446.9" text-anchor="end" font-size="10.6" fill="#b9b9b9">Ямбол</text><line x1="1148" y1="442.9" x2="1154" y2="442.9" stroke="#777"/><text x="1142" y="474.4" text-anchor="end" font-size="10.6" fill="#b9b9b9">Разград</text><line x1="1148" y1="470.4" x2="1154" y2="470.4" stroke="#777"/><text x="1142" y="501.9" text-anchor="end" font-size="10.6" fill="#b9b9b9">Монтана</text><line x1="1148" y1="497.9" x2="1154" y2="497.9" stroke="#777"/><text x="1142" y="529.4" text-anchor="end" font-size="10.6" fill="#b9b9b9">Търговище</text><line x1="1148" y1="525.4" x2="1154" y2="525.4" stroke="#777"/><text x="1142" y="557.0" text-anchor="end" font-size="10.6" fill="#b9b9b9">Смолян</text><line x1="1148" y1="553.0" x2="1154" y2="553.0" stroke="#777"/><line x1="1154" y1="573.5" x2="1245.5" y2="573.5" stroke="#888"/><line x1="1154" y1="573" x2="1154" y2="578" stroke="#888"/><line x1="1245.5" y1="573" x2="1245.5" y2="578" stroke="#888"/><text x="1154" y="596" text-anchor="middle" font-size="10.6" fill="#b9b9b9">0</text><text x="1245" y="596" text-anchor="middle" font-size="10.6" fill="#b9b9b9">200k</text></svg>
</body></html>
